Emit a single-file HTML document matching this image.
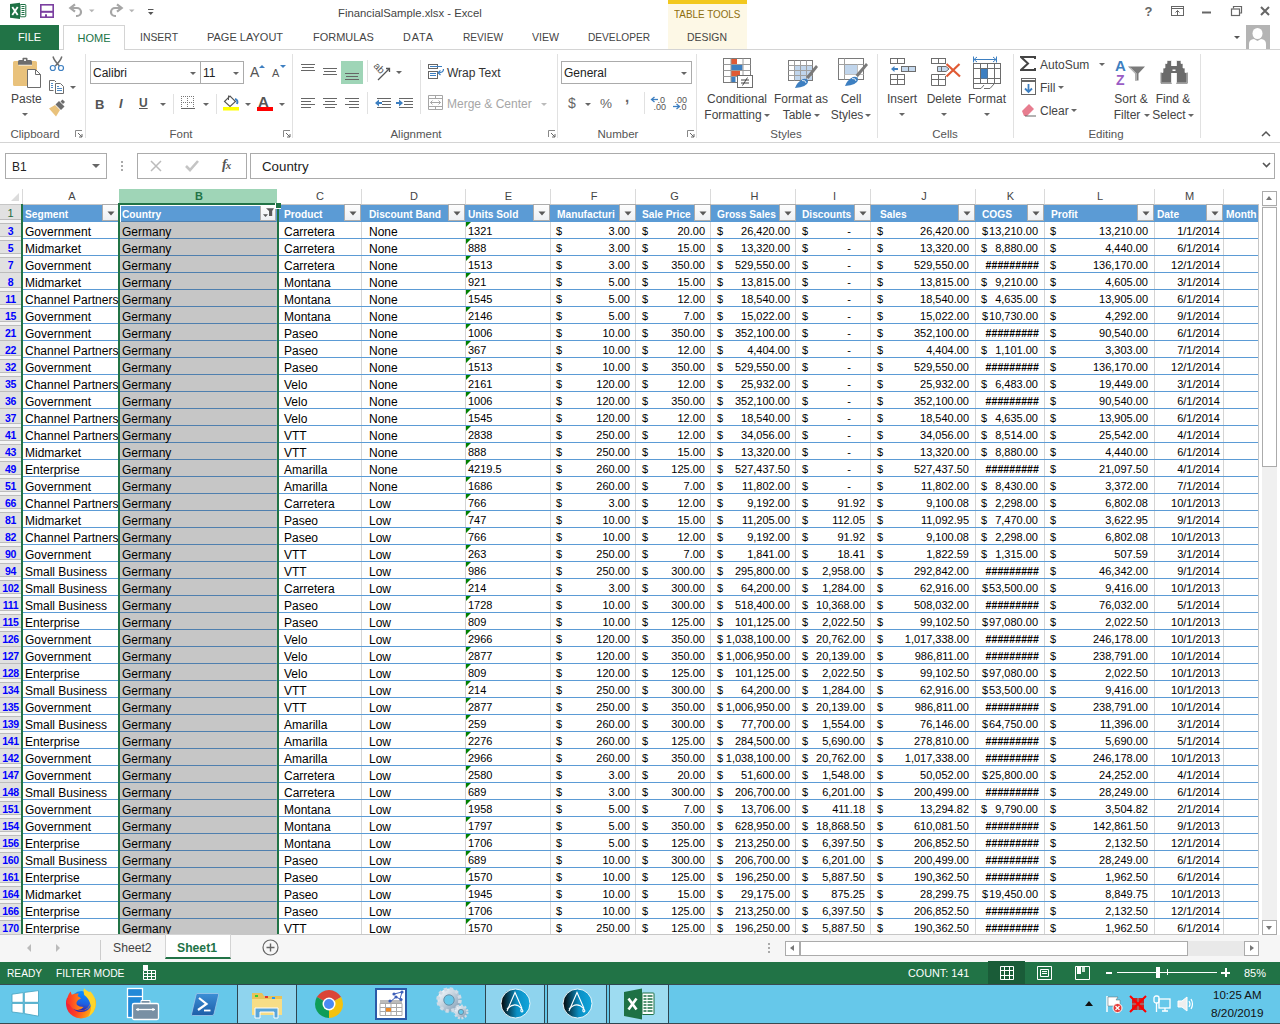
<!DOCTYPE html>
<html><head><meta charset="utf-8"><style>
*{margin:0;padding:0;box-sizing:border-box}
html,body{width:1280px;height:1024px;overflow:hidden;background:#fff;font-family:"Liberation Sans",sans-serif;color:#444}
.a{position:absolute}
#titlebar{position:absolute;left:0;top:0;width:1280px;height:25px;background:#fff}
.title{position:absolute;left:338px;top:7px;font-size:11.3px;color:#444;white-space:nowrap}
.tt{position:absolute;left:668px;top:0;width:79px;height:49px;background:#fdf8e6;border-top:4px solid #f2c81e}
.tt span{position:absolute;left:6px;top:4px;font-size:10.8px;color:#8d6e0e;white-space:nowrap;transform:scaleX(0.915);transform-origin:0 0}
.tt b{position:absolute;left:19px;top:27px;font-size:10.8px;font-weight:normal;color:#444;white-space:nowrap;transform:scaleX(0.965);transform-origin:0 0}
.tab{position:absolute;top:31px;font-size:10.8px;color:#444;white-space:nowrap}
.file{position:absolute;left:0;top:25px;width:59px;height:25px;background:#217346;color:#fff;font-size:11px;text-align:center;line-height:25px}
.home{position:absolute;left:63px;top:25px;width:62px;height:25px;border:1px solid #d4d4d4;border-bottom:none;background:#fff;color:#217346;font-size:11px;text-align:center;line-height:24px}
.tabline{position:absolute;left:0;top:49px;width:1280px;height:1px;background:#d4d4d4}
.ribbon{position:absolute;left:0;top:50px;width:1280px;height:92px;background:#fff}
.rbline{position:absolute;left:0;top:142px;width:1280px;height:1px;background:#d4d4d4}
.gsep{position:absolute;top:54px;width:1px;height:84px;background:#e1e1e1}
.glab{position:absolute;top:127px;font-size:11.5px;color:#555;white-space:nowrap;transform:translateX(-50%)}
.d1{margin-top:1px}
.rt{position:absolute;font-size:12px;color:#444;white-space:nowrap}
.rtc{position:absolute;font-size:12px;color:#444;white-space:nowrap;transform:translateX(-50%)}
.dd{position:absolute;width:0;height:0;border-left:3px solid transparent;border-right:3px solid transparent;border-top:3px solid #666}
.box{position:absolute;border:1px solid #ababab;background:#fff}
#fbar{position:absolute;left:0;top:143px;width:1280px;height:46px;background:#fff}
#colhdr{position:absolute;left:0;top:189px;width:1258px;height:15px}
.corner{position:absolute;left:0;top:0;width:23px;height:15px;border-right:1px solid #d9d9d9}
.corner:after{content:"";position:absolute;left:11px;top:4px;border-left:8px solid transparent;border-bottom:8px solid #dcdcdc}
.ch{position:absolute;top:0;height:15px;font-size:11px;color:#444;text-align:center;line-height:15px;padding-left:2px}
.ch.sel{background:#9fd5b7;color:#217346;border-right:none;font-weight:bold}
.hdrline{position:absolute;left:0;top:204px;width:1258px;height:1px;background:#c6c6c6}
.rh{position:absolute;left:0;width:21px;height:17px;background:#e1e1e1;border-bottom:1px solid #bcbcbc;color:#0000ff;font-size:10.5px;font-weight:bold;text-align:center;line-height:19px;letter-spacing:-0.3px}
.rh.first{color:#1e6b3f;font-weight:normal;font-size:11px;line-height:17px}
.hid{position:absolute;left:0;width:21px;height:5px;border-top:1px solid #bcbcbc;border-bottom:1px solid #bcbcbc;background:#f4f4f4}
.rgreen{position:absolute;left:21px;top:204px;width:2px;height:731px;background:#217346}
.thead{position:absolute;left:23px;width:1235px;height:17px;background:#5b9bd5}
.th{position:absolute;margin-top:1px;height:17px;line-height:17px;padding-left:2px;color:#fff;font-weight:bold;font-size:10.2px;white-space:nowrap;overflow:hidden}
.fb{position:absolute;width:17px;height:17px;border:1px solid #acacac;background:linear-gradient(#fdfdfd,#eef0f3)}
.selbg{position:absolute;left:120px;width:157px;background:#c6c6c6}
.vg{position:absolute;top:222px;width:1px;height:713px;background:#d4d4d4}
.hl{position:absolute;left:23px;width:1235px;height:1px;background:#5b9bd5}
.row{position:absolute;left:0;width:1258px;height:17px}
.row i{position:absolute;top:2px;font-style:normal;line-height:17px;white-space:nowrap;color:#000}
.row i.t{font-size:12px}
.row i.n{font-size:11px;top:1px}
.row i.nr{font-size:11px;top:1px}
.row i.hs{font-size:10.6px;font-weight:bold;letter-spacing:0.05px}
.row b.tri{position:absolute;top:0;width:0;height:0;border-top:5px solid #008000;border-right:5px solid transparent}
.selbox{position:absolute;left:118px;top:203px;width:161px;height:733px;border:2px solid #217346;border-bottom:none}
.handle{position:absolute;left:275px;top:203px;width:6px;height:6px;background:#217346;border:1px solid #fff;border-top:none;border-right:none}
.gridr{position:absolute;left:1258px;top:204px;width:1px;height:731px;background:#c6c6c6}
.gridb{position:absolute;left:0;top:934px;width:1259px;height:1px;background:#c6c6c6}
#vscroll{position:absolute;left:1259px;top:189px;width:21px;height:746px;background:#fff}
#sheets{position:absolute;left:0;top:935px;width:1280px;height:27px;background:#f6f6f6}
#status{position:absolute;left:0;top:962px;width:1280px;height:23px;background:#217346;color:#fff;font-size:11px}
#taskbar{position:absolute;left:0;top:984px;width:1280px;height:40px;background:#66c8ea;border-top:1px solid #3a4a50;border-bottom:1px solid #3a4a50}
.tb{position:absolute;top:1px;width:60px;height:39px;background:#93d6ee;border:1px solid #2e4550}
</style></head><body>
<div id="titlebar"></div>
<svg class="a" style="left:0;top:0" width="160" height="25" viewBox="0 0 160 25">
<path d="M10 4 L20 2.8 L20 19 L10 17.8 Z" fill="#1e7145"/>
<rect x="20" y="4.5" width="5.8" height="12.3" rx="0.8" fill="#fff" stroke="#1e7145" stroke-width="1"/>
<path d="M21.5 6.5h3M21.5 8.5h3M21.5 10.5h3M21.5 12.5h3M21.5 14.5h3" stroke="#1e7145" stroke-width="1.1"/>
<path d="M12.3 7 L17.7 15 M17.7 7 L12.3 15" stroke="#fff" stroke-width="1.8"/>
<rect x="40.8" y="4.8" width="12.4" height="12.4" fill="#fff" stroke="#7b3fa0" stroke-width="1.6"/>
<rect x="41" y="10.8" width="12" height="2" fill="#7b3fa0"/>
<rect x="45" y="14.3" width="2" height="3" fill="#7b3fa0"/>
<path d="M75 4.3 L70.3 8 L75 11.7" fill="none" stroke="#a6a6a6" stroke-width="2.2"/>
<path d="M71 8 H77 A4 4 0 0 1 77 16 H76" fill="none" stroke="#a6a6a6" stroke-width="2.2"/>
<path d="M89 9.5h5.5l-2.75 2.8z" fill="#b4b4b4"/>
<path d="M117 4.3 L121.7 8 L117 11.7" fill="none" stroke="#a6a6a6" stroke-width="2.2"/>
<path d="M121 8 H115 A4 4 0 0 0 115 16 H116" fill="none" stroke="#a6a6a6" stroke-width="2.2"/>
<path d="M129 9.5h5.5l-2.75 2.8z" fill="#b4b4b4"/>
<path d="M148 9.5h5.5" stroke="#555" stroke-width="1"/><path d="M148 12h5.5l-2.75 3z" fill="#555"/>
</svg>
<div class="title">FinancialSample.xlsx - Excel</div>
<div class="tt"><span>TABLE TOOLS</span><b>DESIGN</b></div>
<svg class="a" style="left:1130px;top:0" width="150" height="25" viewBox="0 0 150 25">
<text x="14.5" y="16" font-family="Liberation Sans" font-weight="bold" font-size="13" fill="#666">?</text>
<rect x="41.5" y="6.5" width="12" height="9" fill="none" stroke="#666" stroke-width="1"/><path d="M41.5 8.5h12" stroke="#666"/><path d="M47.5 15V10.5M45.5 12.5l2-2 2 2" fill="none" stroke="#666"/>
<path d="M72 12.5h9" stroke="#666" stroke-width="2"/>
<rect x="101.5" y="9" width="8" height="6.5" fill="none" stroke="#666" stroke-width="1.2"/><path d="M103.5 8.5V6.5h8v6.5h-2" fill="none" stroke="#666" stroke-width="1.2"/>
<path d="M131 7L139 15M139 7L131 15" stroke="#666" stroke-width="2"/>
</svg>
<div class="tabline"></div>
<div class="file">FILE</div>
<div class="home">HOME</div>
<div class="tab" style="left:140px;transform:scaleX(0.965);transform-origin:0 0;letter-spacing:0px">INSERT</div>
<div class="tab" style="left:207px;transform:scaleX(1.02);transform-origin:0 0;letter-spacing:0px">PAGE LAYOUT</div>
<div class="tab" style="left:313px;transform:scaleX(1.015);transform-origin:0 0;letter-spacing:0px">FORMULAS</div>
<div class="tab" style="left:403px;transform:scaleX(1);transform-origin:0 0;letter-spacing:0.9px">DATA</div>
<div class="tab" style="left:463px;transform:scaleX(0.94);transform-origin:0 0;letter-spacing:0px">REVIEW</div>
<div class="tab" style="left:532px;transform:scaleX(0.98);transform-origin:0 0;letter-spacing:0px">VIEW</div>
<div class="tab" style="left:588px;transform:scaleX(0.94);transform-origin:0 0;letter-spacing:0px">DEVELOPER</div>
<div class="dd" style="left:1234px;top:36px;border-top-color:#555"></div>
<svg class="a" style="left:1246px;top:25px" width="24" height="24" viewBox="0 0 24 24"><rect width="24" height="24" fill="#b4b4b4"/><ellipse cx="11.5" cy="8.5" rx="5" ry="5.5" fill="#fff"/><path d="M3 24 V19 Q3 14.5 8 14 L11.5 16 L15 14 Q20 14.5 20 19 V24Z" fill="#fff"/></svg>
<div class="ribbon"></div>
<div class="rbline"></div>
<div class="gsep" style="left:85px"></div>
<div class="gsep" style="left:292px"></div>
<div class="gsep" style="left:557px"></div>
<div class="gsep" style="left:696px"></div>
<div class="gsep" style="left:877px"></div>
<div class="gsep" style="left:1013px"></div>
<div class="gsep" style="left:1200px"></div>
<div class="glab d1" style="left:35px">Clipboard</div>
<div class="glab d1" style="left:181px">Font</div>
<div class="glab d1" style="left:416px">Alignment</div>
<div class="glab d1" style="left:618px">Number</div>
<div class="glab d1" style="left:786px">Styles</div>
<div class="glab d1" style="left:945px">Cells</div>
<div class="glab d1" style="left:1106px">Editing</div>
<svg class="a" style="left:75px;top:130px" width="8" height="8" viewBox="0 0 8 8"><path d="M0.5 7V0.5H7" fill="none" stroke="#888"/><path d="M3 3L7 7M7 4v3H4" fill="none" stroke="#666"/></svg>
<svg class="a" style="left:283px;top:130px" width="8" height="8" viewBox="0 0 8 8"><path d="M0.5 7V0.5H7" fill="none" stroke="#888"/><path d="M3 3L7 7M7 4v3H4" fill="none" stroke="#666"/></svg>
<svg class="a" style="left:548px;top:130px" width="8" height="8" viewBox="0 0 8 8"><path d="M0.5 7V0.5H7" fill="none" stroke="#888"/><path d="M3 3L7 7M7 4v3H4" fill="none" stroke="#666"/></svg>
<svg class="a" style="left:687px;top:130px" width="8" height="8" viewBox="0 0 8 8"><path d="M0.5 7V0.5H7" fill="none" stroke="#888"/><path d="M3 3L7 7M7 4v3H4" fill="none" stroke="#666"/></svg>
<svg class="a" style="left:1261px;top:130px" width="10" height="7" viewBox="0 0 10 7"><path d="M1 6L5 2L9 6" fill="none" stroke="#555" stroke-width="1.5"/></svg>
<svg class="a" style="left:0;top:50px" width="85" height="75" viewBox="0 50 85 75">
<path d="M14.5 61H18.5V65.5H32V61H35.5Q37 61 37 62.5V85Q37 86 36 86H14.5Q13 86 13 84.5V62.5Q13 61 14.5 61Z" fill="#e9c27c"/>
<path d="M18 61.5Q18 60 19.5 60H22.5V58.5Q22.5 57.8 23.3 57.8H26.7Q27.5 57.8 27.5 58.5V60H30.5Q32 60 32 61.5V64.8H18Z" fill="#6d6d6d"/><rect x="24" y="59.3" width="2" height="1.6" fill="#fff"/>
<path d="M27.5 69.5H35.5L40.5 74.5V87.5H27.5Z" fill="#fff" stroke="#6d6d6d" stroke-width="1"/><path d="M35.5 69.5V74.5H40.5" fill="none" stroke="#6d6d6d" stroke-width="1"/>
<path d="M53 56.5Q54 60.5 59.5 66M61.8 56.5Q60.8 60.5 55.3 66" fill="none" stroke="#6d6d6d" stroke-width="1.5"/>
<circle cx="52.8" cy="68" r="2.5" fill="#fff" stroke="#3d7fc1" stroke-width="1.2"/><circle cx="61" cy="68" r="2.5" fill="#fff" stroke="#3d7fc1" stroke-width="1.2"/>
<path d="M49.5 90.5V80.5H54.5L56 82" fill="none" stroke="#6d6d6d" stroke-width="1"/><path d="M49.5 90.5H53.5" stroke="#6d6d6d"/>
<path d="M55.5 93.5V83.5H60.5L63.5 86.5V93.5Z" fill="#fff" stroke="#6d6d6d" stroke-width="1"/>
<path d="M51 83.5h2M51 85.5h2M51 87.5h2M57 86.5h2M57 88.5h5M57 90.5h5" stroke="#3d7fc1" stroke-width="0.9"/>
<path d="M55.5 104.5L59 101L64.5 106.5L61 110Z" fill="#6d6d6d"/><path d="M60.5 101.5L62.5 99.5L65 102L63 104Z" fill="#6d6d6d"/>
<path d="M49 108.5L55 105L60 110L56 116.5Z" fill="#e9c27c"/>
</svg>
<div class="rt d1" style="left:11px;top:91px">Paste</div>
<div class="dd" style="left:22px;top:113px"></div>
<div class="dd" style="left:70px;top:86px"></div>
<div class="box" style="left:90px;top:61px;width:111px;height:23px"></div>
<div class="rt d1" style="left:93px;top:65px;color:#222">Calibri</div>
<div class="dd" style="left:190px;top:72px"></div>
<div class="box" style="left:200px;top:61px;width:44px;height:23px"></div>
<div class="rt d1" style="left:203px;top:65px;color:#222">11</div>
<div class="dd" style="left:233px;top:72px"></div>
<div class="rt d1" style="left:250px;top:63px;font-size:14px;color:#555">A</div><div class="a" style="left:259px;top:65px;border-left:3px solid transparent;border-right:3px solid transparent;border-bottom:3px solid #3d7fc1"></div>
<div class="rt d1" style="left:272px;top:66px;font-size:11px;color:#555">A</div><div class="a" style="left:280px;top:65px;border-left:3px solid transparent;border-right:3px solid transparent;border-top:3px solid #3d7fc1"></div>
<div class="rt d1" style="left:95px;top:96px;font-weight:bold;font-size:13px;color:#555">B</div>
<div class="rt d1" style="left:119px;top:95px;font-style:italic;font-weight:bold;font-size:13px;color:#555">I</div>
<div class="rt d1" style="left:139px;top:95px;font-weight:bold;font-size:12px;color:#555;text-decoration:underline">U</div>
<div class="dd" style="left:160px;top:103px"></div>
<div class="a" style="left:173px;top:94px;width:1px;height:20px;background:#e1e1e1"></div>
<svg class="a" style="left:180px;top:95px" width="16" height="15" viewBox="0 0 16 15"><path d="M1 1.5h13M1 7.5h13M1.5 1v12M7.5 1v12M13.5 1v12" fill="none" stroke="#777" stroke-dasharray="1 1"/><path d="M1 13.5h14" stroke="#666"/></svg>
<div class="dd" style="left:203px;top:103px"></div>
<div class="a" style="left:216px;top:94px;width:1px;height:20px;background:#e1e1e1"></div>
<svg class="a" style="left:222px;top:94px" width="18" height="18" viewBox="0 0 18 18"><path d="M2.5 7.5L8 2L13.5 7.5L8 12.5Z" fill="#fff" stroke="#555" stroke-width="1.1"/><path d="M6.5 1.5V6" stroke="#555"/><path d="M13 5Q16.5 6 15 10" stroke="#3d7fc1" stroke-width="2" fill="none"/><rect x="1" y="13" width="16" height="3.5" fill="#ffff00"/></svg>
<div class="dd" style="left:245px;top:103px"></div>
<div class="rt d1" style="left:258px;top:92px;font-size:15px;font-weight:bold;color:#555">A</div><div class="a" style="left:257px;top:107px;width:16px;height:3.5px;background:#ff0000"></div>
<div class="dd" style="left:279px;top:103px"></div>
<div class="a" style="left:341px;top:61px;width:22px;height:23px;background:#9fd5b7"></div>
<svg class="a" style="left:295px;top:55px" width="70" height="60" viewBox="295 55 70 60"><path d="M301 64.5h14M302 67.5h12M301 70.5h14M323 68.5h14M324 71.5h12M323 74.5h14M345 73.5h14M346 76.5h12M345 79.5h14M301 98.5h14M301 101.5h10M301 104.5h14M301 107.5h10M323 98.5h14M325 101.5h10M323 104.5h14M325 107.5h10M345 98.5h14M349 101.5h10M345 104.5h14M349 107.5h10" stroke="#666" stroke-width="1"/></svg>
<div class="a" style="left:367px;top:60px;width:1px;height:22px;background:#e1e1e1"></div>
<svg class="a" style="left:372px;top:60px" width="24" height="22" viewBox="0 0 24 22"><text x="2" y="12" font-size="10" font-family="Liberation Sans" fill="#555" transform="rotate(45 8 8)">ab</text><path d="M6 20L17 9M14 8.5h3.5v3.5" stroke="#555" stroke-width="1.3" fill="none"/></svg>
<div class="dd" style="left:396px;top:71px"></div>
<div class="a" style="left:367px;top:92px;width:1px;height:22px;background:#e1e1e1"></div>
<svg class="a" style="left:370px;top:92px" width="50" height="20" viewBox="370 92 50 20"><path d="M377 98.5h14M382 101.5h9M382 104.5h9M377 107.5h14M399 98.5h14M404 101.5h9M404 104.5h9M399 107.5h14" stroke="#666"/><path d="M375 103L379 99.5V106.5Z M403 103L399 99.5V106.5Z" fill="#3d7fc1"/><path d="M378 103h4M396 103h4" stroke="#3d7fc1" stroke-width="2"/></svg>
<div class="a" style="left:420px;top:60px;width:1px;height:54px;background:#e1e1e1"></div>
<svg class="a" style="left:424px;top:58px" width="26" height="54" viewBox="424 58 26 54"><rect x="428.5" y="64.5" width="9" height="4" fill="#fff" stroke="#666"/><rect x="428.5" y="71.5" width="9" height="7" fill="#fff" stroke="#666"/><path d="M430 66.5h12M430 73.5h6M430 75.5h6" stroke="#3d7fc1" stroke-width="1"/><path d="M443.5 69Q443.5 72.8 438.5 72.8" stroke="#3d7fc1" stroke-width="1.2" fill="none"/><path d="M440.5 70.5L438 72.8L440.5 75" stroke="#3d7fc1" stroke-width="1.2" fill="none"/><path d="M428.5 95.5h14v14h-14zM428.5 98.5h14M428.5 106.5h14M435.5 95.5v3M435.5 106.5v3" fill="#fff" stroke="#a6a6a6"/><path d="M430.5 102.5h10M432.5 100.5l-2 2 2 2M438.5 100.5l2 2-2 2" fill="none" stroke="#a6a6a6"/></svg>
<div class="rt d1" style="left:447px;top:65px;color:#333">Wrap Text</div>
<div class="rt d1" style="left:447px;top:96px;color:#a6a6a6">Merge &amp; Center</div>
<div class="dd" style="left:541px;top:103px;border-top-color:#bbb"></div>
<div class="box" style="left:561px;top:61px;width:131px;height:23px"></div>
<div class="rt d1" style="left:564px;top:65px;color:#222">General</div>
<div class="dd" style="left:681px;top:72px"></div>
<div class="rt" style="left:568px;top:95px;font-size:14px;color:#666">$</div>
<div class="dd" style="left:585px;top:103px"></div>
<div class="rt" style="left:600px;top:96px;font-size:13.5px;color:#666">%</div>
<div class="rt" style="left:625px;top:88px;font-size:15px;font-weight:bold;color:#666">,</div>
<div class="a" style="left:644px;top:92px;width:1px;height:22px;background:#e1e1e1"></div>
<svg class="a" style="left:650px;top:92px" width="40" height="22" viewBox="650 92 40 22"><text x="657.5" y="102.5" font-size="9" font-family="Liberation Sans" fill="#555">.0</text><text x="653.5" y="109.5" font-size="9" font-family="Liberation Sans" fill="#555">.00</text><path d="M652 99.5h6" stroke="#3d7fc1" stroke-width="1.3"/><path d="M654.5 97L651.5 99.5L654.5 102" stroke="#3d7fc1" stroke-width="1.3" fill="none"/><text x="674.5" y="102.5" font-size="9" font-family="Liberation Sans" fill="#555">.00</text><text x="679" y="109.5" font-size="9" font-family="Liberation Sans" fill="#555">.0</text><path d="M673 106.5h6.5" stroke="#3d7fc1" stroke-width="1.3"/><path d="M676.5 104L679.5 106.5L676.5 109" stroke="#3d7fc1" stroke-width="1.3" fill="none"/></svg>
<svg class="a" style="left:715px;top:52px" width="160" height="40" viewBox="715 52 160 40">
<rect x="731" y="58.5" width="6" height="6" fill="#e05a34"/><rect x="731" y="64.5" width="11.5" height="6" fill="#3d7fc1"/><rect x="731" y="70.5" width="9" height="6" fill="#e05a34"/><rect x="731" y="76.5" width="4.5" height="6" fill="#3d7fc1"/>
<g fill="none" stroke="#7a7a7a" stroke-width="1"><rect x="723.5" y="58.5" width="27" height="24"/><path d="M731 58.5v24M743 58.5v24M723.5 64.5h27M723.5 70.5h27M723.5 76.5h27" stroke="#9a9a9a"/></g>
<rect x="737.5" y="75.5" width="15" height="12" fill="#fff" stroke="#6d6d6d"/><path d="M741 80h8M741 83h8M747.5 77.5L742.5 85.5" stroke="#444" stroke-width="1"/>
<rect x="794" y="66" width="18" height="14" fill="#c0d5ec"/>
<g fill="none" stroke="#7a7a7a" stroke-width="1"><rect x="788.5" y="60.5" width="24" height="20"/><path d="M794.5 60.5v20M800.5 60.5v20M806.5 60.5v20M788.5 65.5h24M788.5 70.5h24M788.5 75.5h24" stroke="#a0a0a0"/></g>
<path d="M816 65L818 67L808.5 79L806 77Z" fill="#7a7a7a"/><path d="M795 88Q797 82 803 79Q808 78 808 82Q807 87 795 88Z" fill="#3d7fc1"/><path d="M802 80.5Q806 80 806 83" stroke="#fff" stroke-width="0.8" fill="none"/>
<rect x="844" y="64" width="13" height="10" fill="#c0d5ec"/>
<g fill="none" stroke="#7a7a7a" stroke-width="1"><rect x="838.5" y="58.5" width="25" height="21"/><path d="M844.5 58.5v21M838.5 64.5h25" stroke="#a0a0a0"/><path d="M857.5 64.5v15M844.5 74.5h19" stroke="#c0c0c0"/></g>
<path d="M866 63L868 65L858 77L855.5 75Z" fill="#7a7a7a"/><path d="M845 86Q847 80 853 77Q858 76 858 80Q857 85 845 86Z" fill="#3d7fc1"/><path d="M852 78.5Q856 78 856 81" stroke="#fff" stroke-width="0.8" fill="none"/>
</svg>
<div class="rtc" style="left:737px;top:92px">Conditional</div>
<div class="rtc" style="left:733px;top:108px">Formatting</div><div class="dd" style="left:764px;top:114px"></div>
<div class="rtc" style="left:801px;top:92px">Format as</div>
<div class="rtc" style="left:797px;top:108px">Table</div><div class="dd" style="left:814px;top:114px"></div>
<div class="rtc" style="left:851px;top:92px">Cell</div>
<div class="rtc" style="left:847px;top:108px">Styles</div><div class="dd" style="left:865px;top:114px"></div>
<svg class="a" style="left:880px;top:52px" width="130" height="40" viewBox="880 52 130 40">
<g fill="none" stroke="#6d6d6d" stroke-width="1">
<rect x="890.5" y="58.5" width="14" height="5"/><path d="M897.5 58.5v5"/>
<rect x="890.5" y="74.5" width="14" height="10"/><path d="M897.5 74.5v10M890.5 79.5h14"/>
<rect x="931.5" y="58.5" width="14" height="5"/><path d="M938.5 58.5v5"/>
<path d="M945.5 74.5H931.5V85.5H945.5V76"/><path d="M938.5 74.5v11M931.5 79.5h14"/>
<rect x="973.5" y="63.5" width="27" height="20"/><path d="M980.5 63.5v20M987.5 63.5v20M994.5 63.5v20M973.5 68.5h27M973.5 78.5h27"/>
<path d="M973.5 83.5V88.5H981L984 85M984 88.5H990L994 84" stroke="#6d6d6d"/>
</g>
<rect x="901.5" y="66.5" width="14" height="5" fill="#c5d9ee" stroke="#6d6d6d"/><path d="M908.5 66.5v5" stroke="#6d6d6d"/>
<path d="M891 69L894.5 66V72Z" fill="#3d7fc1"/><path d="M893 69H898" stroke="#3d7fc1" stroke-width="2"/>
<path d="M937.5 66.5H946L949 69L946 71.5H937.5Z" fill="#c5d9ee" stroke="#6d6d6d"/><path d="M941.5 66.5v5" stroke="#6d6d6d"/>
<path d="M946.5 64L960 76.5M959.5 64L946.5 76.5" stroke="#e05a34" stroke-width="2.2"/>
<rect x="981" y="69" width="6.5" height="9.5" fill="#3d7fc1"/>
<path d="M974 59.5H996M974 59.5L977 57M974 59.5L977 62M996 59.5L993 57M996 59.5L993 62M973.5 56.5v6M996.5 56.5v6" fill="none" stroke="#3d7fc1" stroke-width="1"/>
</svg>
<div class="rtc" style="left:902px;top:92px">Insert</div><div class="dd" style="left:899px;top:113px"></div>
<div class="rtc" style="left:944px;top:92px">Delete</div><div class="dd" style="left:941px;top:113px"></div>
<div class="rtc" style="left:987px;top:92px">Format</div><div class="dd" style="left:984px;top:113px"></div>
<svg class="a" style="left:1020px;top:56px" width="16" height="15" viewBox="0 0 16 15"><path d="M15 3V1H1L8 7.5L1 14H15V12" fill="none" stroke="#444" stroke-width="2"/></svg>
<div class="rt d1" style="left:1040px;top:57px">AutoSum</div><div class="dd" style="left:1099px;top:63px"></div>
<svg class="a" style="left:1021px;top:78px" width="15" height="17" viewBox="0 0 15 17"><rect x="0.5" y="0.5" width="14" height="16" fill="#fff" stroke="#666"/><path d="M0.5 3h14" stroke="#666" stroke-width="2"/><path d="M7.5 6v8M4 10.5l3.5 3.5 3.5-3.5" stroke="#3d7fc1" stroke-width="1.8" fill="none"/></svg>
<div class="rt d1" style="left:1040px;top:80px">Fill</div><div class="dd" style="left:1058px;top:86px"></div>
<svg class="a" style="left:1021px;top:101px" width="16" height="16" viewBox="0 0 16 16"><path d="M1 10L8 3L13 8L6 15H3Z" fill="#e77d8f"/><path d="M4 15H15" stroke="#666"/></svg>
<div class="rt d1" style="left:1040px;top:103px">Clear</div><div class="dd" style="left:1071px;top:109px"></div>
<svg class="a" style="left:1114px;top:57px" width="34" height="30" viewBox="0 0 34 30">
<text x="1" y="14" font-size="15" font-family="Liberation Sans" font-weight="bold" fill="#3d7fc1">A</text><text x="2" y="28" font-size="14" font-family="Liberation Sans" fill="#9a5cc4" font-weight="bold">Z</text>
<path d="M14 9.5H31L24.5 16.5V23.5H21V16.5Z" fill="#7a7a7a"/><path d="M16 10.5L22 16.5V23" stroke="#fff" stroke-width="0.8" fill="none"/></svg>
<div class="rtc" style="left:1131px;top:92px">Sort &amp;</div>
<div class="rtc" style="left:1127px;top:108px">Filter</div><div class="dd" style="left:1144px;top:114px"></div>
<svg class="a" style="left:1158px;top:58px" width="32" height="28" viewBox="1158 58 32 28">
<path d="M1167 60.5H1171.5V83H1161V72.5H1163V68H1165V63.5H1167Z" fill="#6b6b6b" stroke="#fff" stroke-width="0.7"/>
<path d="M1176.5 60.5H1181V63.5H1183V68H1185V72.5H1187V83H1176.5Z" fill="#6b6b6b" stroke="#fff" stroke-width="0.7"/>
<rect x="1171" y="66" width="6" height="7" fill="#6b6b6b"/><rect x="1172.5" y="69.5" width="3" height="1.5" fill="#fff"/>
<path d="M1161 72.5V83.3H1171.8M1176.2 83.3H1187.3V72.5" fill="none" stroke="#6b6b6b" stroke-width="0.8"/>
</svg>
<div class="rtc" style="left:1173px;top:92px">Find &amp;</div>
<div class="rtc" style="left:1169px;top:108px">Select</div><div class="dd" style="left:1188px;top:114px"></div>
<div id="fbar"></div>
<div class="box" style="left:5px;top:153px;width:102px;height:26px"></div>
<div class="rt d1" style="left:12px;top:159px;font-size:12px;color:#222">B1</div>
<div class="dd" style="left:92px;top:164px;border-left-width:4px;border-right-width:4px;border-top-width:4px"></div>
<svg class="a" style="left:121px;top:161px" width="2" height="12"><rect y="0" width="2" height="2" fill="#aaa"/><rect y="4" width="2" height="2" fill="#aaa"/><rect y="8" width="2" height="2" fill="#aaa"/></svg>
<div class="box" style="left:137px;top:153px;width:110px;height:26px"></div>
<svg class="a" style="left:150px;top:160px" width="12" height="12" viewBox="0 0 12 12"><path d="M1 1L11 11M11 1L1 11" stroke="#bbb" stroke-width="1.5"/></svg>
<svg class="a" style="left:185px;top:160px" width="14" height="12" viewBox="0 0 14 12"><path d="M1 6L5 10L13 1" stroke="#c4c4c4" stroke-width="2.6" fill="none"/></svg>
<div class="a" style="left:222px;top:157px;font-family:Liberation Serif;font-style:italic;font-weight:bold;font-size:14px;color:#555;letter-spacing:-1px">f<span style="font-size:11px">x</span></div>
<div class="box" style="left:250px;top:153px;width:1025px;height:26px"></div>
<div class="rt d1" style="left:262px;top:158px;font-size:13.3px;color:#222">Country</div>
<svg class="a" style="left:1262px;top:162px" width="9" height="6" viewBox="0 0 9 6"><path d="M1 1L4.5 4.5L8 1" stroke="#555" stroke-width="1.6" fill="none"/></svg>
<div class="hdrline"></div>
<div class="rgreen"></div>
<div id="colhdr">
<div class="corner"></div>
<div class="ch" style="left:23px;width:96px">A</div>
<div class="ch sel" style="left:119px;width:158px">B</div>
<div class="ch" style="left:277px;width:84px">C</div>
<div class="ch" style="left:361px;width:104px">D</div>
<div class="ch" style="left:465px;width:85px">E</div>
<div class="ch" style="left:550px;width:86px">F</div>
<div class="ch" style="left:636px;width:75px">G</div>
<div class="ch" style="left:711px;width:85px">H</div>
<div class="ch" style="left:796px;width:75px">I</div>
<div class="ch" style="left:871px;width:104px">J</div>
<div class="ch" style="left:975px;width:69px">K</div>
<div class="ch" style="left:1044px;width:110px">L</div>
<div class="ch" style="left:1154px;width:69px">M</div>
<div class="ch" style="left:1223px;width:35px"></div>
<div class="a" style="left:361px;top:0;width:1px;height:15px;background:#dadada"></div>
<div class="a" style="left:465px;top:0;width:1px;height:15px;background:#dadada"></div>
<div class="a" style="left:550px;top:0;width:1px;height:15px;background:#dadada"></div>
<div class="a" style="left:635px;top:0;width:1px;height:15px;background:#dadada"></div>
<div class="a" style="left:710px;top:0;width:1px;height:15px;background:#dadada"></div>
<div class="a" style="left:795px;top:0;width:1px;height:15px;background:#dadada"></div>
<div class="a" style="left:870px;top:0;width:1px;height:15px;background:#dadada"></div>
<div class="a" style="left:975px;top:0;width:1px;height:15px;background:#dadada"></div>
<div class="a" style="left:1044px;top:0;width:1px;height:15px;background:#dadada"></div>
<div class="a" style="left:1154px;top:0;width:1px;height:15px;background:#dadada"></div>
<div class="a" style="left:1223px;top:0;width:1px;height:15px;background:#dadada"></div>
</div>
<div class="rh first" style="top:205px">1</div>
<div class="rh" style="top:222px">3</div>
<div class="hid" style="top:219px"></div>
<div class="rh" style="top:239px">5</div>
<div class="hid" style="top:236px"></div>
<div class="rh" style="top:256px">7</div>
<div class="hid" style="top:253px"></div>
<div class="rh" style="top:273px">8</div>
<div class="rh" style="top:290px">11</div>
<div class="hid" style="top:287px"></div>
<div class="rh" style="top:307px">15</div>
<div class="hid" style="top:304px"></div>
<div class="rh" style="top:324px">21</div>
<div class="hid" style="top:321px"></div>
<div class="rh" style="top:341px">22</div>
<div class="rh" style="top:358px">32</div>
<div class="hid" style="top:355px"></div>
<div class="rh" style="top:375px">35</div>
<div class="hid" style="top:372px"></div>
<div class="rh" style="top:392px">36</div>
<div class="rh" style="top:409px">37</div>
<div class="rh" style="top:426px">41</div>
<div class="hid" style="top:423px"></div>
<div class="rh" style="top:443px">43</div>
<div class="hid" style="top:440px"></div>
<div class="rh" style="top:460px">49</div>
<div class="hid" style="top:457px"></div>
<div class="rh" style="top:477px">51</div>
<div class="hid" style="top:474px"></div>
<div class="rh" style="top:494px">66</div>
<div class="hid" style="top:491px"></div>
<div class="rh" style="top:511px">81</div>
<div class="hid" style="top:508px"></div>
<div class="rh" style="top:528px">82</div>
<div class="rh" style="top:545px">90</div>
<div class="hid" style="top:542px"></div>
<div class="rh" style="top:562px">94</div>
<div class="hid" style="top:559px"></div>
<div class="rh" style="top:579px">102</div>
<div class="hid" style="top:576px"></div>
<div class="rh" style="top:596px">111</div>
<div class="hid" style="top:593px"></div>
<div class="rh" style="top:613px">115</div>
<div class="hid" style="top:610px"></div>
<div class="rh" style="top:630px">126</div>
<div class="hid" style="top:627px"></div>
<div class="rh" style="top:647px">127</div>
<div class="rh" style="top:664px">128</div>
<div class="rh" style="top:681px">134</div>
<div class="hid" style="top:678px"></div>
<div class="rh" style="top:698px">135</div>
<div class="rh" style="top:715px">139</div>
<div class="hid" style="top:712px"></div>
<div class="rh" style="top:732px">141</div>
<div class="hid" style="top:729px"></div>
<div class="rh" style="top:749px">142</div>
<div class="rh" style="top:766px">147</div>
<div class="hid" style="top:763px"></div>
<div class="rh" style="top:783px">148</div>
<div class="rh" style="top:800px">151</div>
<div class="hid" style="top:797px"></div>
<div class="rh" style="top:817px">154</div>
<div class="hid" style="top:814px"></div>
<div class="rh" style="top:834px">156</div>
<div class="hid" style="top:831px"></div>
<div class="rh" style="top:851px">160</div>
<div class="hid" style="top:848px"></div>
<div class="rh" style="top:868px">161</div>
<div class="rh" style="top:885px">164</div>
<div class="hid" style="top:882px"></div>
<div class="rh" style="top:902px">166</div>
<div class="hid" style="top:899px"></div>
<div class="rh" style="top:919px">170</div>
<div class="hid" style="top:916px"></div>
<div class="thead" style="top:205px"></div>
<div class="th" style="left:23px;width:96px;top:205px">Segment</div>
<div class="fb" style="left:102px;top:204px"><svg width="15" height="15" style="position:absolute;left:0;top:0"><path d="M4.5 6.5h7l-3.5 4z" fill="#595959"/></svg></div>
<div class="th" style="left:120px;width:157px;top:205px">Country</div>
<div class="fb" style="left:260px;top:205px;width:16px;height:16px"><svg width="14" height="14" style="position:absolute;left:0;top:0"><path d="M5 2.2H13L11.2 5V10H8V5Z" fill="#5a5a5a"/><path d="M2 8.2H7L4.5 11Z" fill="#5a5a5a"/></svg></div>
<div class="th" style="left:282px;width:79px;top:205px">Product</div>
<div class="fb" style="left:344px;top:204px"><svg width="15" height="15" style="position:absolute;left:0;top:0"><path d="M4.5 6.5h7l-3.5 4z" fill="#595959"/></svg></div>
<div class="th" style="left:367px;width:98px;top:205px">Discount Band</div>
<div class="fb" style="left:448px;top:204px"><svg width="15" height="15" style="position:absolute;left:0;top:0"><path d="M4.5 6.5h7l-3.5 4z" fill="#595959"/></svg></div>
<div class="th" style="left:466px;width:84px;top:205px">Units Sold</div>
<div class="fb" style="left:533px;top:204px"><svg width="15" height="15" style="position:absolute;left:0;top:0"><path d="M4.5 6.5h7l-3.5 4z" fill="#595959"/></svg></div>
<div class="th" style="left:555px;width:81px;top:205px">Manufacturi</div>
<div class="fb" style="left:619px;top:204px"><svg width="15" height="15" style="position:absolute;left:0;top:0"><path d="M4.5 6.5h7l-3.5 4z" fill="#595959"/></svg></div>
<div class="th" style="left:640px;width:71px;top:205px">Sale Price</div>
<div class="fb" style="left:694px;top:204px"><svg width="15" height="15" style="position:absolute;left:0;top:0"><path d="M4.5 6.5h7l-3.5 4z" fill="#595959"/></svg></div>
<div class="th" style="left:715px;width:81px;top:205px">Gross Sales</div>
<div class="fb" style="left:779px;top:204px"><svg width="15" height="15" style="position:absolute;left:0;top:0"><path d="M4.5 6.5h7l-3.5 4z" fill="#595959"/></svg></div>
<div class="th" style="left:800px;width:71px;top:205px">Discounts</div>
<div class="fb" style="left:854px;top:204px"><svg width="15" height="15" style="position:absolute;left:0;top:0"><path d="M4.5 6.5h7l-3.5 4z" fill="#595959"/></svg></div>
<div class="th" style="left:878px;width:97px;top:205px">Sales</div>
<div class="fb" style="left:958px;top:204px"><svg width="15" height="15" style="position:absolute;left:0;top:0"><path d="M4.5 6.5h7l-3.5 4z" fill="#595959"/></svg></div>
<div class="th" style="left:980px;width:64px;top:205px">COGS</div>
<div class="fb" style="left:1027px;top:204px"><svg width="15" height="15" style="position:absolute;left:0;top:0"><path d="M4.5 6.5h7l-3.5 4z" fill="#595959"/></svg></div>
<div class="th" style="left:1049px;width:105px;top:205px">Profit</div>
<div class="fb" style="left:1137px;top:204px"><svg width="15" height="15" style="position:absolute;left:0;top:0"><path d="M4.5 6.5h7l-3.5 4z" fill="#595959"/></svg></div>
<div class="th" style="left:1155px;width:68px;top:205px">Date</div>
<div class="fb" style="left:1206px;top:204px"><svg width="15" height="15" style="position:absolute;left:0;top:0"><path d="M4.5 6.5h7l-3.5 4z" fill="#595959"/></svg></div>
<div class="th" style="left:1224px;width:34px;top:205px">Month</div>
<div class="selbg" style="top:222px;height:714px"></div>
<div class="vg" style="left:361px"></div>
<div class="vg" style="left:465px"></div>
<div class="vg" style="left:550px"></div>
<div class="vg" style="left:635px"></div>
<div class="vg" style="left:710px"></div>
<div class="vg" style="left:795px"></div>
<div class="vg" style="left:870px"></div>
<div class="vg" style="left:975px"></div>
<div class="vg" style="left:1044px"></div>
<div class="vg" style="left:1154px"></div>
<div class="vg" style="left:1223px"></div>
<div class="hl" style="top:238px"></div><div class="a" style="left:120px;width:156px;height:1px;background:#4f7fae;top:238px"></div>
<div class="hl" style="top:255px"></div><div class="a" style="left:120px;width:156px;height:1px;background:#4f7fae;top:255px"></div>
<div class="hl" style="top:272px"></div><div class="a" style="left:120px;width:156px;height:1px;background:#4f7fae;top:272px"></div>
<div class="hl" style="top:289px"></div><div class="a" style="left:120px;width:156px;height:1px;background:#4f7fae;top:289px"></div>
<div class="hl" style="top:306px"></div><div class="a" style="left:120px;width:156px;height:1px;background:#4f7fae;top:306px"></div>
<div class="hl" style="top:323px"></div><div class="a" style="left:120px;width:156px;height:1px;background:#4f7fae;top:323px"></div>
<div class="hl" style="top:340px"></div><div class="a" style="left:120px;width:156px;height:1px;background:#4f7fae;top:340px"></div>
<div class="hl" style="top:357px"></div><div class="a" style="left:120px;width:156px;height:1px;background:#4f7fae;top:357px"></div>
<div class="hl" style="top:374px"></div><div class="a" style="left:120px;width:156px;height:1px;background:#4f7fae;top:374px"></div>
<div class="hl" style="top:391px"></div><div class="a" style="left:120px;width:156px;height:1px;background:#4f7fae;top:391px"></div>
<div class="hl" style="top:408px"></div><div class="a" style="left:120px;width:156px;height:1px;background:#4f7fae;top:408px"></div>
<div class="hl" style="top:425px"></div><div class="a" style="left:120px;width:156px;height:1px;background:#4f7fae;top:425px"></div>
<div class="hl" style="top:442px"></div><div class="a" style="left:120px;width:156px;height:1px;background:#4f7fae;top:442px"></div>
<div class="hl" style="top:459px"></div><div class="a" style="left:120px;width:156px;height:1px;background:#4f7fae;top:459px"></div>
<div class="hl" style="top:476px"></div><div class="a" style="left:120px;width:156px;height:1px;background:#4f7fae;top:476px"></div>
<div class="hl" style="top:493px"></div><div class="a" style="left:120px;width:156px;height:1px;background:#4f7fae;top:493px"></div>
<div class="hl" style="top:510px"></div><div class="a" style="left:120px;width:156px;height:1px;background:#4f7fae;top:510px"></div>
<div class="hl" style="top:527px"></div><div class="a" style="left:120px;width:156px;height:1px;background:#4f7fae;top:527px"></div>
<div class="hl" style="top:544px"></div><div class="a" style="left:120px;width:156px;height:1px;background:#4f7fae;top:544px"></div>
<div class="hl" style="top:561px"></div><div class="a" style="left:120px;width:156px;height:1px;background:#4f7fae;top:561px"></div>
<div class="hl" style="top:578px"></div><div class="a" style="left:120px;width:156px;height:1px;background:#4f7fae;top:578px"></div>
<div class="hl" style="top:595px"></div><div class="a" style="left:120px;width:156px;height:1px;background:#4f7fae;top:595px"></div>
<div class="hl" style="top:612px"></div><div class="a" style="left:120px;width:156px;height:1px;background:#4f7fae;top:612px"></div>
<div class="hl" style="top:629px"></div><div class="a" style="left:120px;width:156px;height:1px;background:#4f7fae;top:629px"></div>
<div class="hl" style="top:646px"></div><div class="a" style="left:120px;width:156px;height:1px;background:#4f7fae;top:646px"></div>
<div class="hl" style="top:663px"></div><div class="a" style="left:120px;width:156px;height:1px;background:#4f7fae;top:663px"></div>
<div class="hl" style="top:680px"></div><div class="a" style="left:120px;width:156px;height:1px;background:#4f7fae;top:680px"></div>
<div class="hl" style="top:697px"></div><div class="a" style="left:120px;width:156px;height:1px;background:#4f7fae;top:697px"></div>
<div class="hl" style="top:714px"></div><div class="a" style="left:120px;width:156px;height:1px;background:#4f7fae;top:714px"></div>
<div class="hl" style="top:731px"></div><div class="a" style="left:120px;width:156px;height:1px;background:#4f7fae;top:731px"></div>
<div class="hl" style="top:748px"></div><div class="a" style="left:120px;width:156px;height:1px;background:#4f7fae;top:748px"></div>
<div class="hl" style="top:765px"></div><div class="a" style="left:120px;width:156px;height:1px;background:#4f7fae;top:765px"></div>
<div class="hl" style="top:782px"></div><div class="a" style="left:120px;width:156px;height:1px;background:#4f7fae;top:782px"></div>
<div class="hl" style="top:799px"></div><div class="a" style="left:120px;width:156px;height:1px;background:#4f7fae;top:799px"></div>
<div class="hl" style="top:816px"></div><div class="a" style="left:120px;width:156px;height:1px;background:#4f7fae;top:816px"></div>
<div class="hl" style="top:833px"></div><div class="a" style="left:120px;width:156px;height:1px;background:#4f7fae;top:833px"></div>
<div class="hl" style="top:850px"></div><div class="a" style="left:120px;width:156px;height:1px;background:#4f7fae;top:850px"></div>
<div class="hl" style="top:867px"></div><div class="a" style="left:120px;width:156px;height:1px;background:#4f7fae;top:867px"></div>
<div class="hl" style="top:884px"></div><div class="a" style="left:120px;width:156px;height:1px;background:#4f7fae;top:884px"></div>
<div class="hl" style="top:901px"></div><div class="a" style="left:120px;width:156px;height:1px;background:#4f7fae;top:901px"></div>
<div class="hl" style="top:918px"></div><div class="a" style="left:120px;width:156px;height:1px;background:#4f7fae;top:918px"></div>
<div class="hl" style="top:935px"></div><div class="a" style="left:120px;width:156px;height:1px;background:#4f7fae;top:935px"></div>
<div class="a" style="left:120px;width:156px;height:1px;background:#4f7fae;top:221px"></div>
<div class="row" style="top:222px"><i class="t" style="left:25px">Government</i><i class="t" style="left:122px">Germany</i><i class="t" style="left:284px">Carretera</i><i class="t" style="left:369px">None</i><i class="t n" style="left:468px">1321</i><b class="tri" style="left:466px"></b><i class="n" style="left:556px">$</i><i class="nr" style="right:628px">3.00</i><i class="n" style="left:642px">$</i><i class="nr" style="right:553px">20.00</i><i class="n" style="left:717px">$</i><i class="nr" style="right:468px">26,420.00</i><i class="n" style="left:802px">$</i><i class="nr" style="right:407px">-</i><i class="n" style="left:877px">$</i><i class="nr" style="right:289px">26,420.00</i><i class="n" style="left:982px">$</i><i class="nr" style="right:220px">13,210.00</i><i class="n" style="left:1050px">$</i><i class="nr" style="right:110px">13,210.00</i><i class="nr" style="right:38px">1/1/2014</i></div>
<div class="row" style="top:239px"><i class="t" style="left:25px">Midmarket</i><i class="t" style="left:122px">Germany</i><i class="t" style="left:284px">Carretera</i><i class="t" style="left:369px">None</i><i class="t n" style="left:468px">888</i><b class="tri" style="left:466px"></b><i class="n" style="left:556px">$</i><i class="nr" style="right:628px">3.00</i><i class="n" style="left:642px">$</i><i class="nr" style="right:553px">15.00</i><i class="n" style="left:717px">$</i><i class="nr" style="right:468px">13,320.00</i><i class="n" style="left:802px">$</i><i class="nr" style="right:407px">-</i><i class="n" style="left:877px">$</i><i class="nr" style="right:289px">13,320.00</i><i class="n" style="left:981px">$</i><i class="nr" style="right:220px">8,880.00</i><i class="n" style="left:1050px">$</i><i class="nr" style="right:110px">4,440.00</i><i class="nr" style="right:38px">6/1/2014</i></div>
<div class="row" style="top:256px"><i class="t" style="left:25px">Government</i><i class="t" style="left:122px">Germany</i><i class="t" style="left:284px">Carretera</i><i class="t" style="left:369px">None</i><i class="t n" style="left:468px">1513</i><b class="tri" style="left:466px"></b><i class="n" style="left:556px">$</i><i class="nr" style="right:628px">3.00</i><i class="n" style="left:642px">$</i><i class="nr" style="right:553px">350.00</i><i class="n" style="left:717px">$</i><i class="nr" style="right:468px">529,550.00</i><i class="n" style="left:802px">$</i><i class="nr" style="right:407px">-</i><i class="n" style="left:877px">$</i><i class="nr" style="right:289px">529,550.00</i><i class="nr hs" style="right:219px">#########</i><i class="n" style="left:1050px">$</i><i class="nr" style="right:110px">136,170.00</i><i class="nr" style="right:38px">12/1/2014</i></div>
<div class="row" style="top:273px"><i class="t" style="left:25px">Midmarket</i><i class="t" style="left:122px">Germany</i><i class="t" style="left:284px">Montana</i><i class="t" style="left:369px">None</i><i class="t n" style="left:468px">921</i><b class="tri" style="left:466px"></b><i class="n" style="left:556px">$</i><i class="nr" style="right:628px">5.00</i><i class="n" style="left:642px">$</i><i class="nr" style="right:553px">15.00</i><i class="n" style="left:717px">$</i><i class="nr" style="right:468px">13,815.00</i><i class="n" style="left:802px">$</i><i class="nr" style="right:407px">-</i><i class="n" style="left:877px">$</i><i class="nr" style="right:289px">13,815.00</i><i class="n" style="left:981px">$</i><i class="nr" style="right:220px">9,210.00</i><i class="n" style="left:1050px">$</i><i class="nr" style="right:110px">4,605.00</i><i class="nr" style="right:38px">3/1/2014</i></div>
<div class="row" style="top:290px"><i class="t" style="left:25px">Channel Partners</i><i class="t" style="left:122px">Germany</i><i class="t" style="left:284px">Montana</i><i class="t" style="left:369px">None</i><i class="t n" style="left:468px">1545</i><b class="tri" style="left:466px"></b><i class="n" style="left:556px">$</i><i class="nr" style="right:628px">5.00</i><i class="n" style="left:642px">$</i><i class="nr" style="right:553px">12.00</i><i class="n" style="left:717px">$</i><i class="nr" style="right:468px">18,540.00</i><i class="n" style="left:802px">$</i><i class="nr" style="right:407px">-</i><i class="n" style="left:877px">$</i><i class="nr" style="right:289px">18,540.00</i><i class="n" style="left:981px">$</i><i class="nr" style="right:220px">4,635.00</i><i class="n" style="left:1050px">$</i><i class="nr" style="right:110px">13,905.00</i><i class="nr" style="right:38px">6/1/2014</i></div>
<div class="row" style="top:307px"><i class="t" style="left:25px">Government</i><i class="t" style="left:122px">Germany</i><i class="t" style="left:284px">Montana</i><i class="t" style="left:369px">None</i><i class="t n" style="left:468px">2146</i><b class="tri" style="left:466px"></b><i class="n" style="left:556px">$</i><i class="nr" style="right:628px">5.00</i><i class="n" style="left:642px">$</i><i class="nr" style="right:553px">7.00</i><i class="n" style="left:717px">$</i><i class="nr" style="right:468px">15,022.00</i><i class="n" style="left:802px">$</i><i class="nr" style="right:407px">-</i><i class="n" style="left:877px">$</i><i class="nr" style="right:289px">15,022.00</i><i class="n" style="left:982px">$</i><i class="nr" style="right:220px">10,730.00</i><i class="n" style="left:1050px">$</i><i class="nr" style="right:110px">4,292.00</i><i class="nr" style="right:38px">9/1/2014</i></div>
<div class="row" style="top:324px"><i class="t" style="left:25px">Government</i><i class="t" style="left:122px">Germany</i><i class="t" style="left:284px">Paseo</i><i class="t" style="left:369px">None</i><i class="t n" style="left:468px">1006</i><b class="tri" style="left:466px"></b><i class="n" style="left:556px">$</i><i class="nr" style="right:628px">10.00</i><i class="n" style="left:642px">$</i><i class="nr" style="right:553px">350.00</i><i class="n" style="left:717px">$</i><i class="nr" style="right:468px">352,100.00</i><i class="n" style="left:802px">$</i><i class="nr" style="right:407px">-</i><i class="n" style="left:877px">$</i><i class="nr" style="right:289px">352,100.00</i><i class="nr hs" style="right:219px">#########</i><i class="n" style="left:1050px">$</i><i class="nr" style="right:110px">90,540.00</i><i class="nr" style="right:38px">6/1/2014</i></div>
<div class="row" style="top:341px"><i class="t" style="left:25px">Channel Partners</i><i class="t" style="left:122px">Germany</i><i class="t" style="left:284px">Paseo</i><i class="t" style="left:369px">None</i><i class="t n" style="left:468px">367</i><b class="tri" style="left:466px"></b><i class="n" style="left:556px">$</i><i class="nr" style="right:628px">10.00</i><i class="n" style="left:642px">$</i><i class="nr" style="right:553px">12.00</i><i class="n" style="left:717px">$</i><i class="nr" style="right:468px">4,404.00</i><i class="n" style="left:802px">$</i><i class="nr" style="right:407px">-</i><i class="n" style="left:877px">$</i><i class="nr" style="right:289px">4,404.00</i><i class="n" style="left:981px">$</i><i class="nr" style="right:220px">1,101.00</i><i class="n" style="left:1050px">$</i><i class="nr" style="right:110px">3,303.00</i><i class="nr" style="right:38px">7/1/2014</i></div>
<div class="row" style="top:358px"><i class="t" style="left:25px">Government</i><i class="t" style="left:122px">Germany</i><i class="t" style="left:284px">Paseo</i><i class="t" style="left:369px">None</i><i class="t n" style="left:468px">1513</i><b class="tri" style="left:466px"></b><i class="n" style="left:556px">$</i><i class="nr" style="right:628px">10.00</i><i class="n" style="left:642px">$</i><i class="nr" style="right:553px">350.00</i><i class="n" style="left:717px">$</i><i class="nr" style="right:468px">529,550.00</i><i class="n" style="left:802px">$</i><i class="nr" style="right:407px">-</i><i class="n" style="left:877px">$</i><i class="nr" style="right:289px">529,550.00</i><i class="nr hs" style="right:219px">#########</i><i class="n" style="left:1050px">$</i><i class="nr" style="right:110px">136,170.00</i><i class="nr" style="right:38px">12/1/2014</i></div>
<div class="row" style="top:375px"><i class="t" style="left:25px">Channel Partners</i><i class="t" style="left:122px">Germany</i><i class="t" style="left:284px">Velo</i><i class="t" style="left:369px">None</i><i class="t n" style="left:468px">2161</i><b class="tri" style="left:466px"></b><i class="n" style="left:556px">$</i><i class="nr" style="right:628px">120.00</i><i class="n" style="left:642px">$</i><i class="nr" style="right:553px">12.00</i><i class="n" style="left:717px">$</i><i class="nr" style="right:468px">25,932.00</i><i class="n" style="left:802px">$</i><i class="nr" style="right:407px">-</i><i class="n" style="left:877px">$</i><i class="nr" style="right:289px">25,932.00</i><i class="n" style="left:981px">$</i><i class="nr" style="right:220px">6,483.00</i><i class="n" style="left:1050px">$</i><i class="nr" style="right:110px">19,449.00</i><i class="nr" style="right:38px">3/1/2014</i></div>
<div class="row" style="top:392px"><i class="t" style="left:25px">Government</i><i class="t" style="left:122px">Germany</i><i class="t" style="left:284px">Velo</i><i class="t" style="left:369px">None</i><i class="t n" style="left:468px">1006</i><b class="tri" style="left:466px"></b><i class="n" style="left:556px">$</i><i class="nr" style="right:628px">120.00</i><i class="n" style="left:642px">$</i><i class="nr" style="right:553px">350.00</i><i class="n" style="left:717px">$</i><i class="nr" style="right:468px">352,100.00</i><i class="n" style="left:802px">$</i><i class="nr" style="right:407px">-</i><i class="n" style="left:877px">$</i><i class="nr" style="right:289px">352,100.00</i><i class="nr hs" style="right:219px">#########</i><i class="n" style="left:1050px">$</i><i class="nr" style="right:110px">90,540.00</i><i class="nr" style="right:38px">6/1/2014</i></div>
<div class="row" style="top:409px"><i class="t" style="left:25px">Channel Partners</i><i class="t" style="left:122px">Germany</i><i class="t" style="left:284px">Velo</i><i class="t" style="left:369px">None</i><i class="t n" style="left:468px">1545</i><b class="tri" style="left:466px"></b><i class="n" style="left:556px">$</i><i class="nr" style="right:628px">120.00</i><i class="n" style="left:642px">$</i><i class="nr" style="right:553px">12.00</i><i class="n" style="left:717px">$</i><i class="nr" style="right:468px">18,540.00</i><i class="n" style="left:802px">$</i><i class="nr" style="right:407px">-</i><i class="n" style="left:877px">$</i><i class="nr" style="right:289px">18,540.00</i><i class="n" style="left:981px">$</i><i class="nr" style="right:220px">4,635.00</i><i class="n" style="left:1050px">$</i><i class="nr" style="right:110px">13,905.00</i><i class="nr" style="right:38px">6/1/2014</i></div>
<div class="row" style="top:426px"><i class="t" style="left:25px">Channel Partners</i><i class="t" style="left:122px">Germany</i><i class="t" style="left:284px">VTT</i><i class="t" style="left:369px">None</i><i class="t n" style="left:468px">2838</i><b class="tri" style="left:466px"></b><i class="n" style="left:556px">$</i><i class="nr" style="right:628px">250.00</i><i class="n" style="left:642px">$</i><i class="nr" style="right:553px">12.00</i><i class="n" style="left:717px">$</i><i class="nr" style="right:468px">34,056.00</i><i class="n" style="left:802px">$</i><i class="nr" style="right:407px">-</i><i class="n" style="left:877px">$</i><i class="nr" style="right:289px">34,056.00</i><i class="n" style="left:981px">$</i><i class="nr" style="right:220px">8,514.00</i><i class="n" style="left:1050px">$</i><i class="nr" style="right:110px">25,542.00</i><i class="nr" style="right:38px">4/1/2014</i></div>
<div class="row" style="top:443px"><i class="t" style="left:25px">Midmarket</i><i class="t" style="left:122px">Germany</i><i class="t" style="left:284px">VTT</i><i class="t" style="left:369px">None</i><i class="t n" style="left:468px">888</i><b class="tri" style="left:466px"></b><i class="n" style="left:556px">$</i><i class="nr" style="right:628px">250.00</i><i class="n" style="left:642px">$</i><i class="nr" style="right:553px">15.00</i><i class="n" style="left:717px">$</i><i class="nr" style="right:468px">13,320.00</i><i class="n" style="left:802px">$</i><i class="nr" style="right:407px">-</i><i class="n" style="left:877px">$</i><i class="nr" style="right:289px">13,320.00</i><i class="n" style="left:981px">$</i><i class="nr" style="right:220px">8,880.00</i><i class="n" style="left:1050px">$</i><i class="nr" style="right:110px">4,440.00</i><i class="nr" style="right:38px">6/1/2014</i></div>
<div class="row" style="top:460px"><i class="t" style="left:25px">Enterprise</i><i class="t" style="left:122px">Germany</i><i class="t" style="left:284px">Amarilla</i><i class="t" style="left:369px">None</i><i class="t n" style="left:468px">4219.5</i><b class="tri" style="left:466px"></b><i class="n" style="left:556px">$</i><i class="nr" style="right:628px">260.00</i><i class="n" style="left:642px">$</i><i class="nr" style="right:553px">125.00</i><i class="n" style="left:717px">$</i><i class="nr" style="right:468px">527,437.50</i><i class="n" style="left:802px">$</i><i class="nr" style="right:407px">-</i><i class="n" style="left:877px">$</i><i class="nr" style="right:289px">527,437.50</i><i class="nr hs" style="right:219px">#########</i><i class="n" style="left:1050px">$</i><i class="nr" style="right:110px">21,097.50</i><i class="nr" style="right:38px">4/1/2014</i></div>
<div class="row" style="top:477px"><i class="t" style="left:25px">Government</i><i class="t" style="left:122px">Germany</i><i class="t" style="left:284px">Amarilla</i><i class="t" style="left:369px">None</i><i class="t n" style="left:468px">1686</i><b class="tri" style="left:466px"></b><i class="n" style="left:556px">$</i><i class="nr" style="right:628px">260.00</i><i class="n" style="left:642px">$</i><i class="nr" style="right:553px">7.00</i><i class="n" style="left:717px">$</i><i class="nr" style="right:468px">11,802.00</i><i class="n" style="left:802px">$</i><i class="nr" style="right:407px">-</i><i class="n" style="left:877px">$</i><i class="nr" style="right:289px">11,802.00</i><i class="n" style="left:981px">$</i><i class="nr" style="right:220px">8,430.00</i><i class="n" style="left:1050px">$</i><i class="nr" style="right:110px">3,372.00</i><i class="nr" style="right:38px">7/1/2014</i></div>
<div class="row" style="top:494px"><i class="t" style="left:25px">Channel Partners</i><i class="t" style="left:122px">Germany</i><i class="t" style="left:284px">Carretera</i><i class="t" style="left:369px">Low</i><i class="t n" style="left:468px">766</i><b class="tri" style="left:466px"></b><i class="n" style="left:556px">$</i><i class="nr" style="right:628px">3.00</i><i class="n" style="left:642px">$</i><i class="nr" style="right:553px">12.00</i><i class="n" style="left:717px">$</i><i class="nr" style="right:468px">9,192.00</i><i class="n" style="left:802px">$</i><i class="nr" style="right:393px">91.92</i><i class="n" style="left:877px">$</i><i class="nr" style="right:289px">9,100.08</i><i class="n" style="left:981px">$</i><i class="nr" style="right:220px">2,298.00</i><i class="n" style="left:1050px">$</i><i class="nr" style="right:110px">6,802.08</i><i class="nr" style="right:38px">10/1/2013</i></div>
<div class="row" style="top:511px"><i class="t" style="left:25px">Midmarket</i><i class="t" style="left:122px">Germany</i><i class="t" style="left:284px">Paseo</i><i class="t" style="left:369px">Low</i><i class="t n" style="left:468px">747</i><b class="tri" style="left:466px"></b><i class="n" style="left:556px">$</i><i class="nr" style="right:628px">10.00</i><i class="n" style="left:642px">$</i><i class="nr" style="right:553px">15.00</i><i class="n" style="left:717px">$</i><i class="nr" style="right:468px">11,205.00</i><i class="n" style="left:802px">$</i><i class="nr" style="right:393px">112.05</i><i class="n" style="left:877px">$</i><i class="nr" style="right:289px">11,092.95</i><i class="n" style="left:981px">$</i><i class="nr" style="right:220px">7,470.00</i><i class="n" style="left:1050px">$</i><i class="nr" style="right:110px">3,622.95</i><i class="nr" style="right:38px">9/1/2014</i></div>
<div class="row" style="top:528px"><i class="t" style="left:25px">Channel Partners</i><i class="t" style="left:122px">Germany</i><i class="t" style="left:284px">Paseo</i><i class="t" style="left:369px">Low</i><i class="t n" style="left:468px">766</i><b class="tri" style="left:466px"></b><i class="n" style="left:556px">$</i><i class="nr" style="right:628px">10.00</i><i class="n" style="left:642px">$</i><i class="nr" style="right:553px">12.00</i><i class="n" style="left:717px">$</i><i class="nr" style="right:468px">9,192.00</i><i class="n" style="left:802px">$</i><i class="nr" style="right:393px">91.92</i><i class="n" style="left:877px">$</i><i class="nr" style="right:289px">9,100.08</i><i class="n" style="left:981px">$</i><i class="nr" style="right:220px">2,298.00</i><i class="n" style="left:1050px">$</i><i class="nr" style="right:110px">6,802.08</i><i class="nr" style="right:38px">10/1/2013</i></div>
<div class="row" style="top:545px"><i class="t" style="left:25px">Government</i><i class="t" style="left:122px">Germany</i><i class="t" style="left:284px">VTT</i><i class="t" style="left:369px">Low</i><i class="t n" style="left:468px">263</i><b class="tri" style="left:466px"></b><i class="n" style="left:556px">$</i><i class="nr" style="right:628px">250.00</i><i class="n" style="left:642px">$</i><i class="nr" style="right:553px">7.00</i><i class="n" style="left:717px">$</i><i class="nr" style="right:468px">1,841.00</i><i class="n" style="left:802px">$</i><i class="nr" style="right:393px">18.41</i><i class="n" style="left:877px">$</i><i class="nr" style="right:289px">1,822.59</i><i class="n" style="left:981px">$</i><i class="nr" style="right:220px">1,315.00</i><i class="n" style="left:1050px">$</i><i class="nr" style="right:110px">507.59</i><i class="nr" style="right:38px">3/1/2014</i></div>
<div class="row" style="top:562px"><i class="t" style="left:25px">Small Business</i><i class="t" style="left:122px">Germany</i><i class="t" style="left:284px">VTT</i><i class="t" style="left:369px">Low</i><i class="t n" style="left:468px">986</i><b class="tri" style="left:466px"></b><i class="n" style="left:556px">$</i><i class="nr" style="right:628px">250.00</i><i class="n" style="left:642px">$</i><i class="nr" style="right:553px">300.00</i><i class="n" style="left:717px">$</i><i class="nr" style="right:468px">295,800.00</i><i class="n" style="left:802px">$</i><i class="nr" style="right:393px">2,958.00</i><i class="n" style="left:877px">$</i><i class="nr" style="right:289px">292,842.00</i><i class="nr hs" style="right:219px">#########</i><i class="n" style="left:1050px">$</i><i class="nr" style="right:110px">46,342.00</i><i class="nr" style="right:38px">9/1/2014</i></div>
<div class="row" style="top:579px"><i class="t" style="left:25px">Small Business</i><i class="t" style="left:122px">Germany</i><i class="t" style="left:284px">Carretera</i><i class="t" style="left:369px">Low</i><i class="t n" style="left:468px">214</i><b class="tri" style="left:466px"></b><i class="n" style="left:556px">$</i><i class="nr" style="right:628px">3.00</i><i class="n" style="left:642px">$</i><i class="nr" style="right:553px">300.00</i><i class="n" style="left:717px">$</i><i class="nr" style="right:468px">64,200.00</i><i class="n" style="left:802px">$</i><i class="nr" style="right:393px">1,284.00</i><i class="n" style="left:877px">$</i><i class="nr" style="right:289px">62,916.00</i><i class="n" style="left:982px">$</i><i class="nr" style="right:220px">53,500.00</i><i class="n" style="left:1050px">$</i><i class="nr" style="right:110px">9,416.00</i><i class="nr" style="right:38px">10/1/2013</i></div>
<div class="row" style="top:596px"><i class="t" style="left:25px">Small Business</i><i class="t" style="left:122px">Germany</i><i class="t" style="left:284px">Paseo</i><i class="t" style="left:369px">Low</i><i class="t n" style="left:468px">1728</i><b class="tri" style="left:466px"></b><i class="n" style="left:556px">$</i><i class="nr" style="right:628px">10.00</i><i class="n" style="left:642px">$</i><i class="nr" style="right:553px">300.00</i><i class="n" style="left:717px">$</i><i class="nr" style="right:468px">518,400.00</i><i class="n" style="left:802px">$</i><i class="nr" style="right:393px">10,368.00</i><i class="n" style="left:877px">$</i><i class="nr" style="right:289px">508,032.00</i><i class="nr hs" style="right:219px">#########</i><i class="n" style="left:1050px">$</i><i class="nr" style="right:110px">76,032.00</i><i class="nr" style="right:38px">5/1/2014</i></div>
<div class="row" style="top:613px"><i class="t" style="left:25px">Enterprise</i><i class="t" style="left:122px">Germany</i><i class="t" style="left:284px">Paseo</i><i class="t" style="left:369px">Low</i><i class="t n" style="left:468px">809</i><b class="tri" style="left:466px"></b><i class="n" style="left:556px">$</i><i class="nr" style="right:628px">10.00</i><i class="n" style="left:642px">$</i><i class="nr" style="right:553px">125.00</i><i class="n" style="left:717px">$</i><i class="nr" style="right:468px">101,125.00</i><i class="n" style="left:802px">$</i><i class="nr" style="right:393px">2,022.50</i><i class="n" style="left:877px">$</i><i class="nr" style="right:289px">99,102.50</i><i class="n" style="left:982px">$</i><i class="nr" style="right:220px">97,080.00</i><i class="n" style="left:1050px">$</i><i class="nr" style="right:110px">2,022.50</i><i class="nr" style="right:38px">10/1/2013</i></div>
<div class="row" style="top:630px"><i class="t" style="left:25px">Government</i><i class="t" style="left:122px">Germany</i><i class="t" style="left:284px">Velo</i><i class="t" style="left:369px">Low</i><i class="t n" style="left:468px">2966</i><b class="tri" style="left:466px"></b><i class="n" style="left:556px">$</i><i class="nr" style="right:628px">120.00</i><i class="n" style="left:642px">$</i><i class="nr" style="right:553px">350.00</i><i class="n" style="left:717px">$</i><i class="nr" style="right:468px">1,038,100.00</i><i class="n" style="left:802px">$</i><i class="nr" style="right:393px">20,762.00</i><i class="n" style="left:877px">$</i><i class="nr" style="right:289px">1,017,338.00</i><i class="nr hs" style="right:219px">#########</i><i class="n" style="left:1050px">$</i><i class="nr" style="right:110px">246,178.00</i><i class="nr" style="right:38px">10/1/2013</i></div>
<div class="row" style="top:647px"><i class="t" style="left:25px">Government</i><i class="t" style="left:122px">Germany</i><i class="t" style="left:284px">Velo</i><i class="t" style="left:369px">Low</i><i class="t n" style="left:468px">2877</i><b class="tri" style="left:466px"></b><i class="n" style="left:556px">$</i><i class="nr" style="right:628px">120.00</i><i class="n" style="left:642px">$</i><i class="nr" style="right:553px">350.00</i><i class="n" style="left:717px">$</i><i class="nr" style="right:468px">1,006,950.00</i><i class="n" style="left:802px">$</i><i class="nr" style="right:393px">20,139.00</i><i class="n" style="left:877px">$</i><i class="nr" style="right:289px">986,811.00</i><i class="nr hs" style="right:219px">#########</i><i class="n" style="left:1050px">$</i><i class="nr" style="right:110px">238,791.00</i><i class="nr" style="right:38px">10/1/2014</i></div>
<div class="row" style="top:664px"><i class="t" style="left:25px">Enterprise</i><i class="t" style="left:122px">Germany</i><i class="t" style="left:284px">Velo</i><i class="t" style="left:369px">Low</i><i class="t n" style="left:468px">809</i><b class="tri" style="left:466px"></b><i class="n" style="left:556px">$</i><i class="nr" style="right:628px">120.00</i><i class="n" style="left:642px">$</i><i class="nr" style="right:553px">125.00</i><i class="n" style="left:717px">$</i><i class="nr" style="right:468px">101,125.00</i><i class="n" style="left:802px">$</i><i class="nr" style="right:393px">2,022.50</i><i class="n" style="left:877px">$</i><i class="nr" style="right:289px">99,102.50</i><i class="n" style="left:982px">$</i><i class="nr" style="right:220px">97,080.00</i><i class="n" style="left:1050px">$</i><i class="nr" style="right:110px">2,022.50</i><i class="nr" style="right:38px">10/1/2013</i></div>
<div class="row" style="top:681px"><i class="t" style="left:25px">Small Business</i><i class="t" style="left:122px">Germany</i><i class="t" style="left:284px">VTT</i><i class="t" style="left:369px">Low</i><i class="t n" style="left:468px">214</i><b class="tri" style="left:466px"></b><i class="n" style="left:556px">$</i><i class="nr" style="right:628px">250.00</i><i class="n" style="left:642px">$</i><i class="nr" style="right:553px">300.00</i><i class="n" style="left:717px">$</i><i class="nr" style="right:468px">64,200.00</i><i class="n" style="left:802px">$</i><i class="nr" style="right:393px">1,284.00</i><i class="n" style="left:877px">$</i><i class="nr" style="right:289px">62,916.00</i><i class="n" style="left:982px">$</i><i class="nr" style="right:220px">53,500.00</i><i class="n" style="left:1050px">$</i><i class="nr" style="right:110px">9,416.00</i><i class="nr" style="right:38px">10/1/2013</i></div>
<div class="row" style="top:698px"><i class="t" style="left:25px">Government</i><i class="t" style="left:122px">Germany</i><i class="t" style="left:284px">VTT</i><i class="t" style="left:369px">Low</i><i class="t n" style="left:468px">2877</i><b class="tri" style="left:466px"></b><i class="n" style="left:556px">$</i><i class="nr" style="right:628px">250.00</i><i class="n" style="left:642px">$</i><i class="nr" style="right:553px">350.00</i><i class="n" style="left:717px">$</i><i class="nr" style="right:468px">1,006,950.00</i><i class="n" style="left:802px">$</i><i class="nr" style="right:393px">20,139.00</i><i class="n" style="left:877px">$</i><i class="nr" style="right:289px">986,811.00</i><i class="nr hs" style="right:219px">#########</i><i class="n" style="left:1050px">$</i><i class="nr" style="right:110px">238,791.00</i><i class="nr" style="right:38px">10/1/2014</i></div>
<div class="row" style="top:715px"><i class="t" style="left:25px">Small Business</i><i class="t" style="left:122px">Germany</i><i class="t" style="left:284px">Amarilla</i><i class="t" style="left:369px">Low</i><i class="t n" style="left:468px">259</i><b class="tri" style="left:466px"></b><i class="n" style="left:556px">$</i><i class="nr" style="right:628px">260.00</i><i class="n" style="left:642px">$</i><i class="nr" style="right:553px">300.00</i><i class="n" style="left:717px">$</i><i class="nr" style="right:468px">77,700.00</i><i class="n" style="left:802px">$</i><i class="nr" style="right:393px">1,554.00</i><i class="n" style="left:877px">$</i><i class="nr" style="right:289px">76,146.00</i><i class="n" style="left:982px">$</i><i class="nr" style="right:220px">64,750.00</i><i class="n" style="left:1050px">$</i><i class="nr" style="right:110px">11,396.00</i><i class="nr" style="right:38px">3/1/2014</i></div>
<div class="row" style="top:732px"><i class="t" style="left:25px">Enterprise</i><i class="t" style="left:122px">Germany</i><i class="t" style="left:284px">Amarilla</i><i class="t" style="left:369px">Low</i><i class="t n" style="left:468px">2276</i><b class="tri" style="left:466px"></b><i class="n" style="left:556px">$</i><i class="nr" style="right:628px">260.00</i><i class="n" style="left:642px">$</i><i class="nr" style="right:553px">125.00</i><i class="n" style="left:717px">$</i><i class="nr" style="right:468px">284,500.00</i><i class="n" style="left:802px">$</i><i class="nr" style="right:393px">5,690.00</i><i class="n" style="left:877px">$</i><i class="nr" style="right:289px">278,810.00</i><i class="nr hs" style="right:219px">#########</i><i class="n" style="left:1050px">$</i><i class="nr" style="right:110px">5,690.00</i><i class="nr" style="right:38px">5/1/2014</i></div>
<div class="row" style="top:749px"><i class="t" style="left:25px">Government</i><i class="t" style="left:122px">Germany</i><i class="t" style="left:284px">Amarilla</i><i class="t" style="left:369px">Low</i><i class="t n" style="left:468px">2966</i><b class="tri" style="left:466px"></b><i class="n" style="left:556px">$</i><i class="nr" style="right:628px">260.00</i><i class="n" style="left:642px">$</i><i class="nr" style="right:553px">350.00</i><i class="n" style="left:717px">$</i><i class="nr" style="right:468px">1,038,100.00</i><i class="n" style="left:802px">$</i><i class="nr" style="right:393px">20,762.00</i><i class="n" style="left:877px">$</i><i class="nr" style="right:289px">1,017,338.00</i><i class="nr hs" style="right:219px">#########</i><i class="n" style="left:1050px">$</i><i class="nr" style="right:110px">246,178.00</i><i class="nr" style="right:38px">10/1/2013</i></div>
<div class="row" style="top:766px"><i class="t" style="left:25px">Government</i><i class="t" style="left:122px">Germany</i><i class="t" style="left:284px">Carretera</i><i class="t" style="left:369px">Low</i><i class="t n" style="left:468px">2580</i><b class="tri" style="left:466px"></b><i class="n" style="left:556px">$</i><i class="nr" style="right:628px">3.00</i><i class="n" style="left:642px">$</i><i class="nr" style="right:553px">20.00</i><i class="n" style="left:717px">$</i><i class="nr" style="right:468px">51,600.00</i><i class="n" style="left:802px">$</i><i class="nr" style="right:393px">1,548.00</i><i class="n" style="left:877px">$</i><i class="nr" style="right:289px">50,052.00</i><i class="n" style="left:982px">$</i><i class="nr" style="right:220px">25,800.00</i><i class="n" style="left:1050px">$</i><i class="nr" style="right:110px">24,252.00</i><i class="nr" style="right:38px">4/1/2014</i></div>
<div class="row" style="top:783px"><i class="t" style="left:25px">Small Business</i><i class="t" style="left:122px">Germany</i><i class="t" style="left:284px">Carretera</i><i class="t" style="left:369px">Low</i><i class="t n" style="left:468px">689</i><b class="tri" style="left:466px"></b><i class="n" style="left:556px">$</i><i class="nr" style="right:628px">3.00</i><i class="n" style="left:642px">$</i><i class="nr" style="right:553px">300.00</i><i class="n" style="left:717px">$</i><i class="nr" style="right:468px">206,700.00</i><i class="n" style="left:802px">$</i><i class="nr" style="right:393px">6,201.00</i><i class="n" style="left:877px">$</i><i class="nr" style="right:289px">200,499.00</i><i class="nr hs" style="right:219px">#########</i><i class="n" style="left:1050px">$</i><i class="nr" style="right:110px">28,249.00</i><i class="nr" style="right:38px">6/1/2014</i></div>
<div class="row" style="top:800px"><i class="t" style="left:25px">Government</i><i class="t" style="left:122px">Germany</i><i class="t" style="left:284px">Montana</i><i class="t" style="left:369px">Low</i><i class="t n" style="left:468px">1958</i><b class="tri" style="left:466px"></b><i class="n" style="left:556px">$</i><i class="nr" style="right:628px">5.00</i><i class="n" style="left:642px">$</i><i class="nr" style="right:553px">7.00</i><i class="n" style="left:717px">$</i><i class="nr" style="right:468px">13,706.00</i><i class="n" style="left:802px">$</i><i class="nr" style="right:393px">411.18</i><i class="n" style="left:877px">$</i><i class="nr" style="right:289px">13,294.82</i><i class="n" style="left:981px">$</i><i class="nr" style="right:220px">9,790.00</i><i class="n" style="left:1050px">$</i><i class="nr" style="right:110px">3,504.82</i><i class="nr" style="right:38px">2/1/2014</i></div>
<div class="row" style="top:817px"><i class="t" style="left:25px">Government</i><i class="t" style="left:122px">Germany</i><i class="t" style="left:284px">Montana</i><i class="t" style="left:369px">Low</i><i class="t n" style="left:468px">1797</i><b class="tri" style="left:466px"></b><i class="n" style="left:556px">$</i><i class="nr" style="right:628px">5.00</i><i class="n" style="left:642px">$</i><i class="nr" style="right:553px">350.00</i><i class="n" style="left:717px">$</i><i class="nr" style="right:468px">628,950.00</i><i class="n" style="left:802px">$</i><i class="nr" style="right:393px">18,868.50</i><i class="n" style="left:877px">$</i><i class="nr" style="right:289px">610,081.50</i><i class="nr hs" style="right:219px">#########</i><i class="n" style="left:1050px">$</i><i class="nr" style="right:110px">142,861.50</i><i class="nr" style="right:38px">9/1/2013</i></div>
<div class="row" style="top:834px"><i class="t" style="left:25px">Enterprise</i><i class="t" style="left:122px">Germany</i><i class="t" style="left:284px">Montana</i><i class="t" style="left:369px">Low</i><i class="t n" style="left:468px">1706</i><b class="tri" style="left:466px"></b><i class="n" style="left:556px">$</i><i class="nr" style="right:628px">5.00</i><i class="n" style="left:642px">$</i><i class="nr" style="right:553px">125.00</i><i class="n" style="left:717px">$</i><i class="nr" style="right:468px">213,250.00</i><i class="n" style="left:802px">$</i><i class="nr" style="right:393px">6,397.50</i><i class="n" style="left:877px">$</i><i class="nr" style="right:289px">206,852.50</i><i class="nr hs" style="right:219px">#########</i><i class="n" style="left:1050px">$</i><i class="nr" style="right:110px">2,132.50</i><i class="nr" style="right:38px">12/1/2014</i></div>
<div class="row" style="top:851px"><i class="t" style="left:25px">Small Business</i><i class="t" style="left:122px">Germany</i><i class="t" style="left:284px">Paseo</i><i class="t" style="left:369px">Low</i><i class="t n" style="left:468px">689</i><b class="tri" style="left:466px"></b><i class="n" style="left:556px">$</i><i class="nr" style="right:628px">10.00</i><i class="n" style="left:642px">$</i><i class="nr" style="right:553px">300.00</i><i class="n" style="left:717px">$</i><i class="nr" style="right:468px">206,700.00</i><i class="n" style="left:802px">$</i><i class="nr" style="right:393px">6,201.00</i><i class="n" style="left:877px">$</i><i class="nr" style="right:289px">200,499.00</i><i class="nr hs" style="right:219px">#########</i><i class="n" style="left:1050px">$</i><i class="nr" style="right:110px">28,249.00</i><i class="nr" style="right:38px">6/1/2014</i></div>
<div class="row" style="top:868px"><i class="t" style="left:25px">Enterprise</i><i class="t" style="left:122px">Germany</i><i class="t" style="left:284px">Paseo</i><i class="t" style="left:369px">Low</i><i class="t n" style="left:468px">1570</i><b class="tri" style="left:466px"></b><i class="n" style="left:556px">$</i><i class="nr" style="right:628px">10.00</i><i class="n" style="left:642px">$</i><i class="nr" style="right:553px">125.00</i><i class="n" style="left:717px">$</i><i class="nr" style="right:468px">196,250.00</i><i class="n" style="left:802px">$</i><i class="nr" style="right:393px">5,887.50</i><i class="n" style="left:877px">$</i><i class="nr" style="right:289px">190,362.50</i><i class="nr hs" style="right:219px">#########</i><i class="n" style="left:1050px">$</i><i class="nr" style="right:110px">1,962.50</i><i class="nr" style="right:38px">6/1/2014</i></div>
<div class="row" style="top:885px"><i class="t" style="left:25px">Midmarket</i><i class="t" style="left:122px">Germany</i><i class="t" style="left:284px">Paseo</i><i class="t" style="left:369px">Low</i><i class="t n" style="left:468px">1945</i><b class="tri" style="left:466px"></b><i class="n" style="left:556px">$</i><i class="nr" style="right:628px">10.00</i><i class="n" style="left:642px">$</i><i class="nr" style="right:553px">15.00</i><i class="n" style="left:717px">$</i><i class="nr" style="right:468px">29,175.00</i><i class="n" style="left:802px">$</i><i class="nr" style="right:393px">875.25</i><i class="n" style="left:877px">$</i><i class="nr" style="right:289px">28,299.75</i><i class="n" style="left:982px">$</i><i class="nr" style="right:220px">19,450.00</i><i class="n" style="left:1050px">$</i><i class="nr" style="right:110px">8,849.75</i><i class="nr" style="right:38px">10/1/2013</i></div>
<div class="row" style="top:902px"><i class="t" style="left:25px">Enterprise</i><i class="t" style="left:122px">Germany</i><i class="t" style="left:284px">Paseo</i><i class="t" style="left:369px">Low</i><i class="t n" style="left:468px">1706</i><b class="tri" style="left:466px"></b><i class="n" style="left:556px">$</i><i class="nr" style="right:628px">10.00</i><i class="n" style="left:642px">$</i><i class="nr" style="right:553px">125.00</i><i class="n" style="left:717px">$</i><i class="nr" style="right:468px">213,250.00</i><i class="n" style="left:802px">$</i><i class="nr" style="right:393px">6,397.50</i><i class="n" style="left:877px">$</i><i class="nr" style="right:289px">206,852.50</i><i class="nr hs" style="right:219px">#########</i><i class="n" style="left:1050px">$</i><i class="nr" style="right:110px">2,132.50</i><i class="nr" style="right:38px">12/1/2014</i></div>
<div class="row" style="top:919px"><i class="t" style="left:25px">Enterprise</i><i class="t" style="left:122px">Germany</i><i class="t" style="left:284px">VTT</i><i class="t" style="left:369px">Low</i><i class="t n" style="left:468px">1570</i><b class="tri" style="left:466px"></b><i class="n" style="left:556px">$</i><i class="nr" style="right:628px">250.00</i><i class="n" style="left:642px">$</i><i class="nr" style="right:553px">125.00</i><i class="n" style="left:717px">$</i><i class="nr" style="right:468px">196,250.00</i><i class="n" style="left:802px">$</i><i class="nr" style="right:393px">5,887.50</i><i class="n" style="left:877px">$</i><i class="nr" style="right:289px">190,362.50</i><i class="nr hs" style="right:219px">#########</i><i class="n" style="left:1050px">$</i><i class="nr" style="right:110px">1,962.50</i><i class="nr" style="right:38px">6/1/2014</i></div>
<div class="a" style="left:120px;top:205px;width:157px;height:17px;border:1px solid #fff;border-bottom:none;border-right:none"></div>
<div class="selbox"></div><div class="handle"></div>
<div class="gridr"></div><div class="gridb"></div>
<div class="a" style="left:1262px;top:206px;width:15px;height:714px;background:#f0f0f0"></div>
<div class="box" style="left:1262px;top:191px;width:15px;height:15px"></div>
<div class="a" style="left:1266px;top:196px;border-left:3.5px solid transparent;border-right:3.5px solid transparent;border-bottom:4px solid #777"></div>
<div class="box" style="left:1262px;top:207px;width:15px;height:260px"></div>
<div class="box" style="left:1262px;top:920px;width:15px;height:15px"></div>
<div class="a" style="left:1266px;top:926px;border-left:3.5px solid transparent;border-right:3.5px solid transparent;border-top:4px solid #777"></div>
<div id="sheets"></div>
<div class="a" style="left:27px;top:944px;border-top:4px solid transparent;border-bottom:4px solid transparent;border-right:4px solid #bbb"></div>
<div class="a" style="left:56px;top:944px;border-top:4px solid transparent;border-bottom:4px solid transparent;border-left:4px solid #bbb"></div>
<div class="a" style="left:100px;top:940px;width:1px;height:20px;background:#ccc"></div>
<div class="rt" style="left:113px;top:941px;font-size:12.2px;color:#444">Sheet2</div>
<div class="a" style="left:165px;top:934px;width:66px;height:25px;background:#fff;border:1px solid #d4d4d4;border-bottom:2px solid #217346"></div>
<div class="rt" style="left:177px;top:941px;font-size:12.2px;font-weight:bold;color:#217346">Sheet1</div>
<svg class="a" style="left:262px;top:939px" width="17" height="17" viewBox="0 0 17 17"><circle cx="8.5" cy="8.5" r="7.5" fill="none" stroke="#666" stroke-width="1.2"/><path d="M8.5 4.5v8M4.5 8.5h8" stroke="#666" stroke-width="1.4"/></svg>
<svg class="a" style="left:768px;top:943px" width="3" height="11"><rect width="2" height="2" y="0" fill="#aaa"/><rect width="2" height="2" y="4" fill="#aaa"/><rect width="2" height="2" y="8" fill="#aaa"/></svg>
<div class="a" style="left:785px;top:941px;width:474px;height:15px;background:#e9e9e9"></div>
<div class="box" style="left:785px;top:941px;width:15px;height:15px"></div>
<div class="a" style="left:790px;top:945px;border-top:3.5px solid transparent;border-bottom:3.5px solid transparent;border-right:4px solid #777"></div>
<div class="box" style="left:800px;top:941px;width:388px;height:15px"></div>
<div class="box" style="left:1244px;top:941px;width:15px;height:15px"></div>
<div class="a" style="left:1250px;top:945px;border-top:3.5px solid transparent;border-bottom:3.5px solid transparent;border-left:4px solid #777"></div>
<div id="status"></div>
<div class="rt" style="left:7px;top:968px;font-size:10.2px;color:#fff">READY</div>
<div class="rt" style="left:56px;top:968px;font-size:10.3px;color:#fff">FILTER MODE</div>
<svg class="a" style="left:143px;top:965px" width="13" height="15" viewBox="0 0 13 15"><rect x="0" y="0" width="5" height="5" fill="#fff"/><path d="M0.5 5.5h12v9h-12zM0.5 8.5h12M0.5 11.5h12M4.5 5.5v9M8.5 5.5v9" fill="none" stroke="#fff"/></svg>
<div class="rt" style="left:908px;top:967px;font-size:10.8px;color:#fff">COUNT: 141</div>
<div class="a" style="left:988px;top:961px;width:37px;height:24px;background:#1a5c38"></div>
<svg class="a" style="left:1000px;top:966px" width="14" height="14" viewBox="0 0 14 14"><path d="M0.5 0.5h13v13h-13zM0.5 4.5h13M0.5 9.5h13M4.5 0.5v13M9.5 0.5v13" fill="none" stroke="#fff"/></svg>
<svg class="a" style="left:1037px;top:966px" width="15" height="14" viewBox="0 0 15 14"><path d="M0.5 0.5h14v13h-14zM3.5 3.5h8v7h-8zM5 5.5h5M5 7.5h5" fill="none" stroke="#fff"/></svg>
<svg class="a" style="left:1075px;top:966px" width="15" height="14" viewBox="0 0 15 14"><path d="M0.5 0.5h14v13h-14z" fill="none" stroke="#fff"/><rect x="2" y="1" width="4" height="7" fill="#fff"/><rect x="7" y="1" width="3" height="5" fill="#cfe3d6"/></svg>
<div class="a" style="left:1106px;top:972px;width:6px;height:2px;background:#fff"></div>
<div class="a" style="left:1117px;top:972px;width:100px;height:1px;background:#fff"></div>
<div class="a" style="left:1156px;top:967px;width:4px;height:11px;background:#fff"></div>
<div class="a" style="left:1167px;top:969px;width:1px;height:6px;background:#fff"></div>
<div class="a" style="left:1221px;top:972px;width:9px;height:2px;background:#fff"></div><div class="a" style="left:1224.5px;top:968px;width:2px;height:9px;background:#fff"></div>
<div class="rt" style="left:1244px;top:967px;font-size:11px;color:#fff">85%</div>
<div id="taskbar"></div>
<div class="tb" style="left:237px;top:984px;height:40px;background:#8fd4ee"></div>
<div class="tb" style="left:485px;top:984px;height:40px;background:#8fd4ee"></div>
<div class="tb" style="left:547px;top:984px;height:40px;background:#8fd4ee"></div>
<div class="tb" style="left:609px;top:984px;height:40px;background:#9edcf1"></div>
<svg class="a" style="left:10px;top:989px" width="30" height="29" viewBox="-1 -1 30 29"><path d="M1 4.2L12.2 2.6V12.3H1Z M13.3 2.4L27.5 0.6V12.3H13.3Z M1 13.4H12.2V23.4L1 22Z M13.3 13.4H27.5V26.2L13.3 23.6Z" fill="#fff" stroke="#4ba7c5" stroke-width="0.9" stroke-linejoin="round"/></svg>
<svg class="a" style="left:62px;top:986px" width="38" height="36" viewBox="0 0 38 36"><defs>
<linearGradient id="ffo" x1="0" y1="0.3" x2="1" y2="0.7"><stop offset="0" stop-color="#e8163f"/><stop offset="0.45" stop-color="#ff3d24"/><stop offset="0.75" stop-color="#ff8a12"/><stop offset="1" stop-color="#ffc21a"/></linearGradient>
<linearGradient id="ffb" x1="0.5" y1="0" x2="0.3" y2="1"><stop offset="0" stop-color="#0b8cff"/><stop offset="0.6" stop-color="#1e5fe0"/><stop offset="1" stop-color="#3a1a9e"/></linearGradient>
<linearGradient id="fff" x1="0" y1="0" x2="1" y2="0"><stop offset="0" stop-color="#ff2a2a"/><stop offset="1" stop-color="#ff9a10"/></linearGradient></defs>
<clipPath id="ffc"><rect x="0" y="12" width="38" height="24"/></clipPath>
<circle cx="19.5" cy="15.5" r="10.5" fill="url(#ffb)"/>
<circle cx="19" cy="17.5" r="15" fill="url(#ffo)" clip-path="url(#ffc)"/>
<path d="M10 20Q12 26 19.5 26Q27 26 29.5 18.5L29 15Q28 24 19.5 24.5Q12.5 24.5 10 20Z" fill="url(#ffb)"/>
<circle cx="19.5" cy="15.5" r="8.8" fill="url(#ffb)"/>
<path d="M4.5 17Q5 10 8.5 5.5L9.8 8.8Q13 7.2 16.8 7.5L15.5 10Q18 11.3 19 12.5L16.2 14Q13.5 16.5 15 19Q17.2 20.8 21.5 21Q19.5 23.8 15.5 24Q10 23.5 7.5 18.5Z" fill="url(#fff)"/>
<path d="M22 2.2Q24.5 4.8 27 6L28.5 5.5Q33.8 11 33.6 18.5Q33 26.5 26 31Q30.5 24 28.2 17.5Q26.8 12.5 22.2 9Q20.8 5 22 2.2Z" fill="#ffd52a"/>
</svg>
<svg class="a" style="left:126px;top:987px" width="35" height="34" viewBox="0 0 35 34"><rect x="1.5" y="1.5" width="15" height="29" fill="#2289d8" stroke="#fff" stroke-width="1.3"/><path d="M1.5 9.5h15" stroke="#fff" stroke-width="1.3"/><path d="M15 16v-2.5h9V16" fill="#7890a4" stroke="#fff" stroke-width="1"/><rect x="6.5" y="16.5" width="26" height="16" rx="1.5" fill="#7890a4" stroke="#fff" stroke-width="1.3"/><path d="M10 22.5h19" stroke="#fff" stroke-width="1.3"/><circle cx="12" cy="22.5" r="1.2" fill="#fff"/><circle cx="27" cy="22.5" r="1.2" fill="#fff"/></svg>
<svg class="a" style="left:191px;top:993px" width="28" height="23" viewBox="0 0 28 23"><defs><linearGradient id="psg" x1="0" y1="0" x2="0" y2="1"><stop offset="0" stop-color="#3d8fd6"/><stop offset="1" stop-color="#1d5ea8"/></linearGradient></defs><path d="M6 0.5H27Q28 0.5 27.6 2L23 21Q22.6 22.5 21 22.5H1.5Q0.2 22.5 0.6 21L5 2Q5.4 0.5 6 0.5Z" fill="url(#psg)" stroke="#9fc8ea" stroke-width="0.8"/><path d="M8 5L15.5 11L7 17" stroke="#fff" stroke-width="2.2" fill="none"/><path d="M13 17.5h6.5" stroke="#fff" stroke-width="1.8"/></svg>
<svg class="a" style="left:251px;top:990px" width="32" height="30" viewBox="0 0 32 30"><path d="M1 3h10l2 3h18v19H1Z" fill="#e8c35a"/><rect x="4" y="5" width="3" height="2" fill="#3c3"/><rect x="14" y="6" width="3" height="2" fill="#d33"/><rect x="21" y="7" width="3" height="2" fill="#29f"/><path d="M1 9h30v16H1Z" fill="#f7dd86"/><path d="M4 28V18h23v10h-4v-6H9v6Z" fill="#5aa5d8" stroke="#fff"/></svg>
<svg class="a" style="left:314px;top:989px" width="30" height="30" viewBox="0 0 30 30"><path d="M15 15L2.88 8A14 14 0 0 1 27.12 8Z" fill="#db4437"/><path d="M15 15L27.12 8A14 14 0 0 1 15 29Z" fill="#f4c20d"/><path d="M15 15L15 29A14 14 0 0 1 2.88 8Z" fill="#0f9d58"/><circle cx="15" cy="15" r="6.5" fill="#fff"/><circle cx="15" cy="15" r="5" fill="#4a8af4"/></svg>
<svg class="a" style="left:375px;top:988px" width="32" height="32" viewBox="0 0 32 32"><rect x="1" y="1" width="30" height="30" fill="#fff" stroke="#2a5aa8" stroke-width="2"/><rect x="5" y="12" width="22" height="3.5" fill="#bbb"/><path d="M5 15.5h22v12H5ZM5 19.5h22M5 23.5h22M10.5 15.5v12M16 15.5v12M21.5 15.5v12" fill="none" stroke="#aaa"/><rect x="11" y="20" width="5" height="3.5" fill="#f08a24"/><path d="M15 14L21 9L25 11L27 4L19 6" stroke="#3d5fb9" stroke-width="1" fill="none"/><circle cx="15" cy="13" r="1.6" fill="#3d5fb9"/><circle cx="21" cy="9" r="1.6" fill="#3d5fb9"/><circle cx="26" cy="11.5" r="1.6" fill="#3d5fb9"/><circle cx="27" cy="4" r="1.6" fill="#3d5fb9"/><circle cx="19" cy="6" r="1.6" fill="#3d5fb9"/></svg>
<svg class="a" style="left:436px;top:987px" width="34" height="34" viewBox="0 0 34 34"><defs><linearGradient id="gg" x1="0" y1="0" x2="1" y2="1"><stop offset="0" stop-color="#f2f6fa"/><stop offset="1" stop-color="#8aa4ba"/></linearGradient></defs>
<circle cx="13" cy="13" r="8.5" fill="none" stroke="url(#gg)" stroke-width="6"/><circle cx="13" cy="13" r="11" fill="none" stroke="#cfdbe6" stroke-width="3.5" stroke-dasharray="3.2 2.6"/><circle cx="13" cy="13" r="5.2" fill="none" stroke="#6d8396" stroke-width="0.8"/>
<circle cx="25" cy="25" r="4.5" fill="none" stroke="url(#gg)" stroke-width="3.5"/><circle cx="25" cy="25" r="6.3" fill="none" stroke="#cfdbe6" stroke-width="2.4" stroke-dasharray="2 1.6"/><circle cx="25" cy="25" r="2.6" fill="none" stroke="#6d8396" stroke-width="0.8"/></svg>
<svg class="a" style="left:500px;top:988px" width="31" height="31" viewBox="0 0 31 31"><defs><linearGradient id="ag515" x1="0" x2="1"><stop offset="0" stop-color="#050505"/><stop offset="0.55" stop-color="#0a8fc4"/><stop offset="1" stop-color="#12a6dc"/></linearGradient></defs><circle cx="15.5" cy="15.5" r="14.5" fill="url(#ag515)" stroke="#e8f6fb" stroke-width="1"/><path d="M7 23L15 4.5L22 20.5" stroke="#fff" stroke-width="1.1" fill="none"/><path d="M7 21Q15 13 21.5 20.5Q24 23.5 22 24Q20 23.5 21.5 20.5" stroke="#fff" stroke-width="1.1" fill="none"/></svg>
<svg class="a" style="left:562px;top:988px" width="31" height="31" viewBox="0 0 31 31"><defs><linearGradient id="ag577" x1="0" x2="1"><stop offset="0" stop-color="#050505"/><stop offset="0.55" stop-color="#0a8fc4"/><stop offset="1" stop-color="#12a6dc"/></linearGradient></defs><circle cx="15.5" cy="15.5" r="14.5" fill="url(#ag577)" stroke="#e8f6fb" stroke-width="1"/><path d="M7 23L15 4.5L22 20.5" stroke="#fff" stroke-width="1.1" fill="none"/><path d="M7 21Q15 13 21.5 20.5Q24 23.5 22 24Q20 23.5 21.5 20.5" stroke="#fff" stroke-width="1.1" fill="none"/></svg>
<svg class="a" style="left:623px;top:988px" width="32" height="32" viewBox="0 0 32 32"><path d="M1 4L19 0.5V31.5L1 28Z" fill="#1e7145"/><rect x="19" y="5" width="12" height="21.5" rx="0.8" fill="#fff" stroke="#1e7145" stroke-width="1"/><path d="M20.5 8h9M20.5 11h9M20.5 14h9M20.5 17h9M20.5 20h9M20.5 23h9" stroke="#1e7145" stroke-width="1.6"/><path d="M24 6v19" stroke="#fff" stroke-width="1"/><path d="M5.5 10.5L13.5 21.5M13.5 10.5L5.5 21.5" stroke="#fff" stroke-width="2.6"/></svg>
<div class="a" style="left:1085px;top:1001px;border-left:4px solid transparent;border-right:4px solid transparent;border-bottom:5px solid #111"></div>
<svg class="a" style="left:1105px;top:995px" width="18" height="18" viewBox="0 0 18 18"><path d="M2 1v16" stroke="#fff" stroke-width="1.5"/><path d="M3 2h10l-2 3h4v6H3Z" fill="#fff" stroke="#666" stroke-width="0.5"/><circle cx="12.5" cy="13" r="4.5" fill="#e53935" stroke="#fff"/><path d="M10.5 11l4 4M14.5 11l-4 4" stroke="#fff" stroke-width="1.2"/></svg>
<svg class="a" style="left:1129px;top:995px" width="18" height="18" viewBox="0 0 18 18"><rect x="3" y="3" width="12" height="12" fill="#c62828"/><path d="M9 3v12M3 9h12" stroke="#999"/><path d="M1 1L17 17M17 1L1 17" stroke="#ff0000" stroke-width="2"/></svg>
<svg class="a" style="left:1153px;top:995px" width="18" height="18" viewBox="0 0 18 18"><rect x="1" y="1" width="5" height="7" rx="2" fill="none" stroke="#fff" stroke-width="1.3"/><path d="M3.5 8v9" stroke="#fff" stroke-width="1.3"/><rect x="6" y="4" width="11" height="9" fill="none" stroke="#fff" stroke-width="1.3"/><path d="M9 16h6M12 13v3" stroke="#fff" stroke-width="1.3"/></svg>
<svg class="a" style="left:1177px;top:995px" width="18" height="18" viewBox="0 0 18 18"><path d="M1 6h4l5-4v14l-5-4H1Z" fill="#eee" stroke="#fff"/><path d="M12 6Q14 9 12 12M14 4Q17 9 14 14" fill="none" stroke="#fff" stroke-width="1.2"/></svg>
<div class="rt" style="left:1213px;top:989px;font-size:11.5px;color:#111">10:25 AM</div>
<div class="rt" style="left:1211px;top:1006px;font-size:11.8px;color:#111">8/20/2019</div>
</body></html>
